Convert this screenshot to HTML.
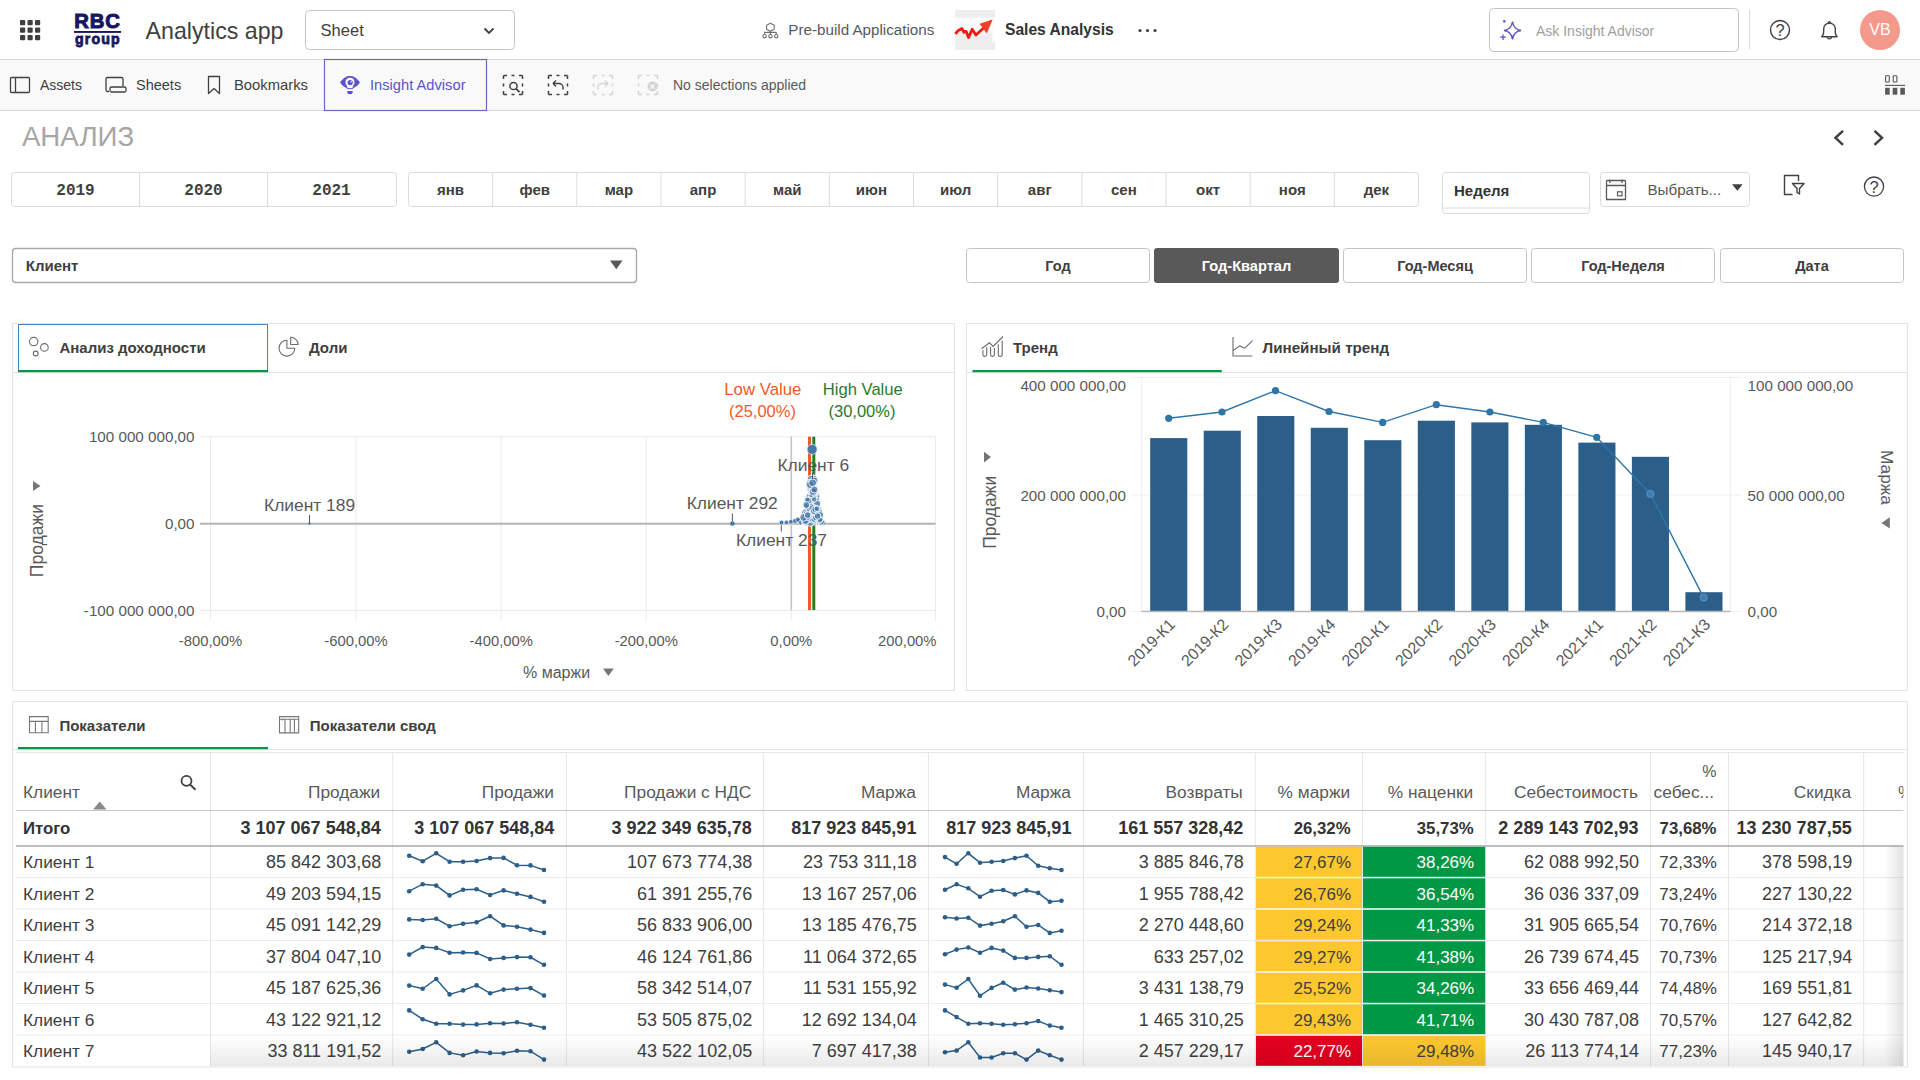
<!DOCTYPE html>
<html><head><meta charset="utf-8"><title>Analytics app</title>
<style>html,body{margin:0;padding:0;background:#fff;width:1920px;height:1080px;overflow:hidden}svg{display:block}</style></head>
<body><svg width="1920" height="1080" viewBox="0 0 1920 1080">
<rect x="0" y="0" width="1920" height="59.5" fill="#ffffff"  rx="0" />
<rect x="0" y="59.5" width="1920" height="51" fill="#f9f9f9"  rx="0" />
<line x1="0" y1="59.5" x2="1920" y2="59.5" stroke="#d6d6d6" stroke-width="1" />
<line x1="0" y1="110.5" x2="1920" y2="110.5" stroke="#d6d6d6" stroke-width="1" />
<rect x="20.0" y="20.0" width="5.2" height="5.2" fill="#404040"  rx="1" />
<rect x="20.0" y="27.5" width="5.2" height="5.2" fill="#404040"  rx="1" />
<rect x="20.0" y="35.0" width="5.2" height="5.2" fill="#404040"  rx="1" />
<rect x="27.5" y="20.0" width="5.2" height="5.2" fill="#404040"  rx="1" />
<rect x="27.5" y="27.5" width="5.2" height="5.2" fill="#404040"  rx="1" />
<rect x="27.5" y="35.0" width="5.2" height="5.2" fill="#404040"  rx="1" />
<rect x="35.0" y="20.0" width="5.2" height="5.2" fill="#404040"  rx="1" />
<rect x="35.0" y="27.5" width="5.2" height="5.2" fill="#404040"  rx="1" />
<rect x="35.0" y="35.0" width="5.2" height="5.2" fill="#404040"  rx="1" />
<text x="74.2" y="28.3" font-family="Liberation Sans" font-size="20.3" fill="#17175e" font-weight="700" text-anchor="start" stroke="#17175e" stroke-width="1" letter-spacing="0.9">RBC</text>
<rect x="74" y="31" width="47" height="1.9" fill="#17175e"  rx="0" />
<text x="75" y="43.6" font-family="Liberation Sans" font-size="14.2" fill="#17175e" font-weight="700" text-anchor="start" stroke="#17175e" stroke-width="0.8" letter-spacing="1.1">group</text>
<text x="145.6" y="39" font-family="Liberation Sans" font-size="23.2" fill="#404040" font-weight="400" text-anchor="start" >Analytics app</text>
<rect x="305.5" y="10.5" width="209" height="39" fill="#fff" stroke="#c4c4c4" stroke-width="1" rx="4" />
<text x="320.6" y="35.6" font-family="Liberation Sans" font-size="16.5" fill="#404040" font-weight="400" text-anchor="start" >Sheet</text>
<path d="M484.5 28.5 L489 33 L493.5 28.5" stroke="#404040" stroke-width="1.8" fill="none" />
<path d="M770.4 23.2 L774.2 25.3 L774.2 29.2 L770.4 31.2 L766.6 29.2 L766.6 25.3 Z M764.6 34.4 V32.4 H776.2 V34.4 M770.4 31.2 V34.4" stroke="#707070" stroke-width="1.1" fill="none" stroke-linejoin="round"/>
<circle cx="764.6" cy="36.2" r="1.7" fill="none" stroke="#707070" stroke-width="1.1" />
<circle cx="770.4" cy="36.2" r="1.7" fill="none" stroke="#707070" stroke-width="1.1" />
<circle cx="776.2" cy="36.2" r="1.7" fill="none" stroke="#707070" stroke-width="1.1" />
<text x="788.3" y="35" font-family="Liberation Sans" font-size="15.2" fill="#595959" font-weight="400" text-anchor="start" >Pre-build Applications</text>
<rect x="955" y="10" width="40" height="40" fill="#eeeeee"  rx="0" />
<rect x="955" y="17.7" width="40" height="24.3" fill="#fbfbfb"  rx="0" />
<path d="M955 35 L962 31 L968 38 L972 31 L976 36 L986 31 L992 33 L992 42 L955 42 Z" stroke="#d9d9d9" stroke-width="0" fill="#e4e4e4" opacity="0.55"/>
<path d="M955.3 33.9 L958.3 30.5 L962 28.6 L963.9 32.3 L966.2 31.4 L968.5 37.6 L972.2 29.3 L975.9 35 L984.5 27.3" stroke="#f2190e" stroke-width="2.8" fill="none" stroke-linejoin="round"/>
<path d="M980.1 24 L992.1 20 L986.6 32.8 Z" stroke="#f03c2a" stroke-width="0.8" fill="#f03c2a" stroke-linejoin="round"/>
<text x="1005" y="35" font-family="Liberation Sans" font-size="15.6" fill="#333333" font-weight="700" text-anchor="start" >Sales Analysis</text>
<circle cx="1140.0" cy="30.5" r="1.6" fill="#404040"  />
<circle cx="1147.5" cy="30.5" r="1.6" fill="#404040"  />
<circle cx="1155.0" cy="30.5" r="1.6" fill="#404040"  />
<rect x="1489.5" y="8.5" width="249" height="43" fill="#fff" stroke="#c4c4c4" stroke-width="1" rx="4" />
<path d="M1512.5 21.5 Q1513.5 29.5 1521 30.5 Q1513.5 31.5 1512.5 39.5 Q1511.5 31.5 1504 30.5 Q1511.5 29.5 1512.5 21.5 Z" stroke="#5b53c9" stroke-width="1.4" fill="none" />
<circle cx="1504.3" cy="21.3" r="1.3" fill="#5b53c9"  />
<path d="M1503 34.5 v5.5 M1500.2 37.2 h5.6" stroke="#5b53c9" stroke-width="1.3" fill="none" />
<text x="1536" y="36.2" font-family="Liberation Sans" font-size="14" fill="#a0a0a0" font-weight="400" text-anchor="start" >Ask Insight Advisor</text>
<line x1="1749.5" y1="10" x2="1749.5" y2="49" stroke="#d9d9d9" stroke-width="1" />
<circle cx="1780" cy="30" r="9.5" fill="none" stroke="#404040" stroke-width="1.4" />
<text x="1780" y="36.3" font-family="Liberation Sans" font-size="16.5" fill="#404040" font-weight="400" text-anchor="middle" >?</text>
<path d="M1821.8 36.7 H1837 L1835.6 34.2 C1835.2 32.5 1835.3 30.5 1835.3 28.8 C1835.3 25.5 1832.8 23.2 1829.4 23.2 C1826 23.2 1823.7 25.5 1823.7 28.8 C1823.7 30.5 1823.8 32.5 1823.3 34.2 Z" stroke="#404040" stroke-width="1.4" fill="none" stroke-linejoin="round"/>
<path d="M1827.2 36.9 A2.3 2.6 0 0 0 1831.7 36.9 M1828.1 23.1 A1.3 1.5 0 1 1 1830.7 23.1" stroke="#404040" stroke-width="1.2" fill="none" />
<circle cx="1880" cy="30" r="20" fill="#f4998c"  />
<text x="1880" y="34.6" font-family="Liberation Sans" font-size="16" fill="#ffffff" font-weight="400" text-anchor="middle" >VB</text>
<rect x="10.5" y="77.5" width="19" height="15" fill="none" stroke="#404040" stroke-width="1.3" rx="1" />
<line x1="15.5" y1="77.5" x2="15.5" y2="92.5" stroke="#404040" stroke-width="1.3" />
<text x="40" y="90.3" font-family="Liberation Sans" font-size="14" fill="#404040" font-weight="400" text-anchor="start" >Assets</text>
<path d="M109 91.5 h-1.5 a1.5 1.5 0 0 1 -1.5 -1.5 v-11 a1.5 1.5 0 0 1 1.5 -1.5 h14 a1.5 1.5 0 0 1 1.5 1.5 v7 M111.5 87 h13 a1.5 1.5 0 0 1 1.5 1.5 v2 a1.5 1.5 0 0 1 -1.5 1.5 h-13 a1.5 1.5 0 0 1 -1.5 -1.5 v-2 a1.5 1.5 0 0 1 1.5 -1.5 Z" stroke="#404040" stroke-width="1.3" fill="none" />
<text x="136" y="90.3" font-family="Liberation Sans" font-size="14.5" fill="#404040" font-weight="400" text-anchor="start" >Sheets</text>
<path d="M208.5 76.5 h11 v17 l-5.5 -5 l-5.5 5 Z" stroke="#404040" stroke-width="1.3" fill="none" stroke-linejoin="round"/>
<text x="234" y="90.3" font-family="Liberation Sans" font-size="14.8" fill="#404040" font-weight="400" text-anchor="start" >Bookmarks</text>
<rect x="324.5" y="59.5" width="162" height="51" fill="#f9f9f9" stroke="#6c65cb" stroke-width="1.2" rx="0" />
<path d="M340 82.5 C343.5 77.5 346.5 76 350 76 C353.5 76 356.5 77.5 360 82.5 C356.5 87 353.5 88.8 350 89 C346.5 88.8 343.5 87 340 82.5 Z" stroke="#5b53c9" stroke-width="0" fill="#5b53c9" />
<path d="M350 77.2 a5 5 0 0 1 3.6 8.5 l-0.9 2.9 h-5.4 l-0.9 -2.9 A5 5 0 0 1 350 77.2 Z" stroke="#5b53c9" stroke-width="0.9" fill="#f9f9f9" />
<circle cx="350.2" cy="82.6" r="2.6" fill="#5b53c9"  />
<circle cx="351.1" cy="81.7" r="0.8" fill="#f9f9f9"  />
<path d="M347.2 91.1 h5.6 l-0.6 2.8 h-4.4 Z" stroke="#5b53c9" stroke-width="0" fill="#5b53c9" />
<text x="370" y="90.3" font-family="Liberation Sans" font-size="14.7" fill="#5b53c9" font-weight="400" text-anchor="start" >Insight Advisor</text>
<rect x="503.5" y="75.5" width="19" height="19" fill="none" stroke="#404040" stroke-width="1.5" rx="0" stroke-dasharray="3.5 4.5 3 4.5 3.5 0"/>
<circle cx="513.5" cy="86" r="3.6" fill="none" stroke="#404040" stroke-width="1.5" />
<line x1="516" y1="88.7" x2="519.5" y2="92.2" stroke="#404040" stroke-width="1.8" />
<rect x="548.5" y="75.5" width="19" height="19" fill="none" stroke="#404040" stroke-width="1.5" rx="0" stroke-dasharray="3.5 4.5 3 4.5 3.5 0"/>
<path d="M553 83.5 l3 -3 M553 83.5 l3 3 M553 83.5 h6 a4 4 0 0 1 4 4 v2" stroke="#404040" stroke-width="1.4" fill="none" />
<rect x="593.5" y="75.5" width="19" height="19" fill="none" stroke="#d4d4d4" stroke-width="1.5" rx="0" stroke-dasharray="3.5 4.5 3 4.5 3.5 0"/>
<path d="M608 83.5 l-3 -3 M608 83.5 l-3 3 M608 83.5 h-6 a4 4 0 0 0 -4 4 v2" stroke="#d4d4d4" stroke-width="1.4" fill="none" />
<rect x="638.5" y="75.5" width="19" height="19" fill="none" stroke="#d4d4d4" stroke-width="1.5" rx="0" stroke-dasharray="3.5 4.5 3 4.5 3.5 0"/>
<circle cx="652.5" cy="86.5" r="5" fill="#d4d4d4"  />
<path d="M650.3 84.3 l4.4 4.4 M654.7 84.3 l-4.4 4.4" stroke="#f9f9f9" stroke-width="1.4" fill="none" />
<text x="673" y="90.3" font-family="Liberation Sans" font-size="14" fill="#595959" font-weight="400" text-anchor="start" >No selections applied</text>
<rect x="1885.6" y="75.8" width="3.7" height="6.2" fill="none" stroke="#555555" stroke-width="1.1" rx="0.6" />
<rect x="1893.2" y="75.8" width="3.7" height="6.2" fill="none" stroke="#555555" stroke-width="1.1" rx="0.6" />
<line x1="1885" y1="85.4" x2="1905" y2="85.4" stroke="#555555" stroke-width="1.1" />
<rect x="1885.1" y="87.8" width="4.6" height="6.9" fill="#5a5a5a"  rx="0" />
<rect x="1892.7" y="87.8" width="4.6" height="6.9" fill="#5a5a5a"  rx="0" />
<rect x="1900.3" y="87.8" width="4.6" height="6.9" fill="#5a5a5a"  rx="0" />
<text x="21.9" y="146" font-family="Liberation Sans" font-size="27.7" fill="#a6a6a6" font-weight="400" text-anchor="start" >АНАЛИЗ</text>
<path d="M1843 130.8 L1835.5 137.8 L1843 144.8" stroke="#404040" stroke-width="2.5" fill="none" />
<path d="M1874.5 130.8 L1882 137.8 L1874.5 144.8" stroke="#404040" stroke-width="2.5" fill="none" />
<rect x="11.5" y="172.5" width="385" height="34" fill="#fff" stroke="#dcdcdc" stroke-width="1" rx="3" />
<line x1="139.5" y1="172.5" x2="139.5" y2="206.5" stroke="#dcdcdc" stroke-width="1" />
<line x1="267.5" y1="172.5" x2="267.5" y2="206.5" stroke="#dcdcdc" stroke-width="1" />
<text x="75.5" y="195" font-family="Liberation Mono" font-size="16" fill="#404040" font-weight="700" text-anchor="middle" >2019</text>
<text x="203.5" y="195" font-family="Liberation Mono" font-size="16" fill="#404040" font-weight="700" text-anchor="middle" >2020</text>
<text x="331.5" y="195" font-family="Liberation Mono" font-size="16" fill="#404040" font-weight="700" text-anchor="middle" >2021</text>
<rect x="408.5" y="172.5" width="1010" height="34" fill="#fff" stroke="#dcdcdc" stroke-width="1" rx="3" />
<text x="450.5833333333333" y="195.4" font-family="Liberation Sans" font-size="15" fill="#404040" font-weight="700" text-anchor="middle" >янв</text>
<line x1="492.6666666666667" y1="172.5" x2="492.6666666666667" y2="206.5" stroke="#dcdcdc" stroke-width="1" />
<text x="534.75" y="195.4" font-family="Liberation Sans" font-size="15" fill="#404040" font-weight="700" text-anchor="middle" >фев</text>
<line x1="576.8333333333334" y1="172.5" x2="576.8333333333334" y2="206.5" stroke="#dcdcdc" stroke-width="1" />
<text x="618.9166666666667" y="195.4" font-family="Liberation Sans" font-size="15" fill="#404040" font-weight="700" text-anchor="middle" >мар</text>
<line x1="661.0" y1="172.5" x2="661.0" y2="206.5" stroke="#dcdcdc" stroke-width="1" />
<text x="703.0833333333334" y="195.4" font-family="Liberation Sans" font-size="15" fill="#404040" font-weight="700" text-anchor="middle" >апр</text>
<line x1="745.1666666666667" y1="172.5" x2="745.1666666666667" y2="206.5" stroke="#dcdcdc" stroke-width="1" />
<text x="787.25" y="195.4" font-family="Liberation Sans" font-size="15" fill="#404040" font-weight="700" text-anchor="middle" >май</text>
<line x1="829.3333333333334" y1="172.5" x2="829.3333333333334" y2="206.5" stroke="#dcdcdc" stroke-width="1" />
<text x="871.4166666666667" y="195.4" font-family="Liberation Sans" font-size="15" fill="#404040" font-weight="700" text-anchor="middle" >июн</text>
<line x1="913.5" y1="172.5" x2="913.5" y2="206.5" stroke="#dcdcdc" stroke-width="1" />
<text x="955.5833333333334" y="195.4" font-family="Liberation Sans" font-size="15" fill="#404040" font-weight="700" text-anchor="middle" >июл</text>
<line x1="997.6666666666667" y1="172.5" x2="997.6666666666667" y2="206.5" stroke="#dcdcdc" stroke-width="1" />
<text x="1039.75" y="195.4" font-family="Liberation Sans" font-size="15" fill="#404040" font-weight="700" text-anchor="middle" >авг</text>
<line x1="1081.8333333333335" y1="172.5" x2="1081.8333333333335" y2="206.5" stroke="#dcdcdc" stroke-width="1" />
<text x="1123.9166666666667" y="195.4" font-family="Liberation Sans" font-size="15" fill="#404040" font-weight="700" text-anchor="middle" >сен</text>
<line x1="1166.0" y1="172.5" x2="1166.0" y2="206.5" stroke="#dcdcdc" stroke-width="1" />
<text x="1208.0833333333335" y="195.4" font-family="Liberation Sans" font-size="15" fill="#404040" font-weight="700" text-anchor="middle" >окт</text>
<line x1="1250.1666666666667" y1="172.5" x2="1250.1666666666667" y2="206.5" stroke="#dcdcdc" stroke-width="1" />
<text x="1292.25" y="195.4" font-family="Liberation Sans" font-size="15" fill="#404040" font-weight="700" text-anchor="middle" >ноя</text>
<line x1="1334.3333333333335" y1="172.5" x2="1334.3333333333335" y2="206.5" stroke="#dcdcdc" stroke-width="1" />
<text x="1376.4166666666667" y="195.4" font-family="Liberation Sans" font-size="15" fill="#404040" font-weight="700" text-anchor="middle" >дек</text>
<rect x="1442.5" y="172.5" width="147" height="41" fill="#fff" stroke="#dcdcdc" stroke-width="1" rx="3" />
<line x1="1442.5" y1="208" x2="1589.5" y2="208" stroke="#dcdcdc" stroke-width="1" />
<text x="1454" y="196" font-family="Liberation Sans" font-size="15" fill="#333333" font-weight="700" text-anchor="start" >Неделя</text>
<rect x="1600.5" y="172.5" width="149" height="34" fill="#fff" stroke="#dcdcdc" stroke-width="1" rx="3" />
<path d="M1606.5 185.5 h19 M1606.5 199.5 v-18 a1 1 0 0 1 1 -1 h17 a1 1 0 0 1 1 1 v18 Z M1609.8 179.5 v3.5 M1622 179.5 v3.5" stroke="#595959" stroke-width="1.3" fill="none" />
<rect x="1617.5" y="191.8" width="4.5" height="4" fill="none" stroke="#595959" stroke-width="1.2" rx="0" />
<text x="1647.4" y="195" font-family="Liberation Sans" font-size="15.2" fill="#595959" font-weight="400" text-anchor="start" >Выбрать...</text>
<path d="M1732 184.2 h10.7 l-5.35 6.5 Z" stroke="#404040" stroke-width="0" fill="#404040" />
<path d="M1798.5 181 v-5.5 h-14 v19 h8" stroke="#404040" stroke-width="1.4" fill="none" />
<path d="M1792.5 183.5 h11.5 l-4.5 5 v5.5 l-2.5 -1.5 v-4 Z" stroke="#404040" stroke-width="1.4" fill="none" stroke-linejoin="round"/>
<circle cx="1874" cy="186.6" r="9.6" fill="none" stroke="#404040" stroke-width="1.3" />
<text x="1874" y="192.6" font-family="Liberation Sans" font-size="16.5" fill="#404040" font-weight="400" text-anchor="middle" >?</text>
<rect x="12.5" y="248.5" width="624" height="34" fill="#fff" stroke="#a8a8a8" stroke-width="1.3" rx="3" />
<text x="25.8" y="271" font-family="Liberation Sans" font-size="15" fill="#404040" font-weight="700" text-anchor="start" >Клиент</text>
<path d="M610 260.5 h12.6 l-6.3 8.8 Z" stroke="#595959" stroke-width="0" fill="#595959" />
<rect x="966.5" y="248.5" width="183" height="34" fill="#fff" stroke="#c4c4c4" stroke-width="1" rx="3" />
<text x="1058.0" y="271.2" font-family="Liberation Sans" font-size="14.5" fill="#404040" font-weight="700" text-anchor="middle" >Год</text>
<rect x="1154" y="248" width="185" height="35" fill="#595959"  rx="3" />
<text x="1246.5" y="271.2" font-family="Liberation Sans" font-size="14.6" fill="#ffffff" font-weight="700" text-anchor="middle" >Год-Квартал</text>
<rect x="1343.5" y="248.5" width="183" height="34" fill="#fff" stroke="#c4c4c4" stroke-width="1" rx="3" />
<text x="1435.0" y="271.2" font-family="Liberation Sans" font-size="14.5" fill="#404040" font-weight="700" text-anchor="middle" >Год-Месяц</text>
<rect x="1531.5" y="248.5" width="183" height="34" fill="#fff" stroke="#c4c4c4" stroke-width="1" rx="3" />
<text x="1623.0" y="271.2" font-family="Liberation Sans" font-size="14.5" fill="#404040" font-weight="700" text-anchor="middle" >Год-Неделя</text>
<rect x="1720.5" y="248.5" width="183" height="34" fill="#fff" stroke="#c4c4c4" stroke-width="1" rx="3" />
<text x="1812.0" y="271.2" font-family="Liberation Sans" font-size="14.5" fill="#404040" font-weight="700" text-anchor="middle" >Дата</text>
<rect x="12.5" y="323.5" width="942" height="367" fill="#fff" stroke="#e3e3e3" stroke-width="1" rx="0" />
<line x1="12.5" y1="372.5" x2="954.5" y2="372.5" stroke="#e3e3e3" stroke-width="1" />
<rect x="18.5" y="324.5" width="249" height="47" fill="none" stroke="#4e84b5" stroke-width="1" rx="0" />
<rect x="18" y="370" width="250" height="2.2" fill="#009845"  rx="0" />
<circle cx="33.7" cy="341.6" r="4.2" fill="none" stroke="#6b6b6b" stroke-width="1.1" />
<circle cx="44.4" cy="347.4" r="3.8" fill="none" stroke="#6b6b6b" stroke-width="1.1" />
<circle cx="35.7" cy="353.5" r="2.4" fill="none" stroke="#6b6b6b" stroke-width="1.1" />
<text x="59.4" y="353.2" font-family="Liberation Sans" font-size="15" fill="#404040" font-weight="700" text-anchor="start" >Анализ доходности</text>
<path d="M286.9 340.3 A7.9 7.9 0 1 0 294.8 348.2 H286.9 Z" stroke="#6b6b6b" stroke-width="1.1" fill="none" />
<path d="M290.7 337.3 V344.5 H298 A7.3 7.3 0 0 0 290.7 337.3 Z" stroke="#6b6b6b" stroke-width="1.1" fill="none" />
<text x="309" y="353.2" font-family="Liberation Sans" font-size="15" fill="#404040" font-weight="700" text-anchor="start" >Доли</text>
<line x1="210.5" y1="436.5" x2="210.5" y2="621" stroke="#ebebeb" stroke-width="1" />
<line x1="356.0" y1="436.5" x2="356.0" y2="621" stroke="#ebebeb" stroke-width="1" />
<line x1="501.2" y1="436.5" x2="501.2" y2="621" stroke="#ebebeb" stroke-width="1" />
<line x1="646.3" y1="436.5" x2="646.3" y2="621" stroke="#ebebeb" stroke-width="1" />
<line x1="791.3" y1="436.5" x2="791.3" y2="621" stroke="#ebebeb" stroke-width="1" />
<line x1="935.5" y1="436.5" x2="935.5" y2="621" stroke="#ebebeb" stroke-width="1" />
<line x1="200" y1="436.75" x2="935.5" y2="436.75" stroke="#ebebeb" stroke-width="1" />
<line x1="200" y1="610.5" x2="935.5" y2="610.5" stroke="#ebebeb" stroke-width="1" />
<line x1="200" y1="523.75" x2="935.5" y2="523.75" stroke="#b3b3b3" stroke-width="2" />
<line x1="791.3" y1="436.5" x2="791.3" y2="610.5" stroke="#c4c4c4" stroke-width="1.6" />
<text x="194.5" y="442.05" font-family="Liberation Sans" font-size="15.2" fill="#595959" font-weight="400" text-anchor="end" >100 000 000,00</text>
<text x="194.5" y="529.05" font-family="Liberation Sans" font-size="15.2" fill="#595959" font-weight="400" text-anchor="end" >0,00</text>
<text x="194.5" y="615.8" font-family="Liberation Sans" font-size="15.2" fill="#595959" font-weight="400" text-anchor="end" >-100 000 000,00</text>
<text x="210.5" y="645.8" font-family="Liberation Sans" font-size="14.8" fill="#595959" font-weight="400" text-anchor="middle" >-800,00%</text>
<text x="356.0" y="645.8" font-family="Liberation Sans" font-size="14.8" fill="#595959" font-weight="400" text-anchor="middle" >-600,00%</text>
<text x="501.2" y="645.8" font-family="Liberation Sans" font-size="14.8" fill="#595959" font-weight="400" text-anchor="middle" >-400,00%</text>
<text x="646.3" y="645.8" font-family="Liberation Sans" font-size="14.8" fill="#595959" font-weight="400" text-anchor="middle" >-200,00%</text>
<text x="791.3" y="645.8" font-family="Liberation Sans" font-size="14.8" fill="#595959" font-weight="400" text-anchor="middle" >0,00%</text>
<text x="936.5" y="645.8" font-family="Liberation Sans" font-size="14.8" fill="#595959" font-weight="400" text-anchor="end" >200,00%</text>
<text x="0" y="0" font-family="Liberation Sans" font-size="17.5" fill="#595959" font-weight="400" text-anchor="middle" transform="translate(42.5,540.6) rotate(-90)">Продажи</text>
<path d="M33 481 L40.5 486 L33 491 Z" stroke="#757575" stroke-width="0" fill="#757575" />
<text x="523" y="678" font-family="Liberation Sans" font-size="16" fill="#595959" font-weight="400" text-anchor="start" >% маржи</text>
<path d="M603 668.6 h10.8 l-5.4 7.3 Z" stroke="#757575" stroke-width="0" fill="#757575" />
<line x1="809.5" y1="436.7" x2="809.5" y2="610" stroke="#f05a28" stroke-width="3" />
<line x1="813.8" y1="436.7" x2="813.8" y2="610" stroke="#2b7a2b" stroke-width="3" />
<text x="762.8" y="395.2" font-family="Liberation Sans" font-size="16.8" fill="#f05a28" font-weight="400" text-anchor="middle" >Low Value</text>
<text x="762.5" y="416.8" font-family="Liberation Sans" font-size="16.5" fill="#f05a28" font-weight="400" text-anchor="middle" >(25,00%)</text>
<text x="862.8" y="395.2" font-family="Liberation Sans" font-size="16.6" fill="#2b7a2b" font-weight="400" text-anchor="middle" >High Value</text>
<text x="862" y="416.8" font-family="Liberation Sans" font-size="16.5" fill="#2b7a2b" font-weight="400" text-anchor="middle" >(30,00%)</text>
<line x1="309.5" y1="515" x2="309.5" y2="523" stroke="#595959" stroke-width="1" />
<circle cx="309.5" cy="523.5" r="1.2" fill="#4477aa"  />
<line x1="732.4" y1="513.5" x2="732.4" y2="521" stroke="#595959" stroke-width="1" />
<circle cx="732.4" cy="523.5" r="2.3" fill="#4477aa"  />
<line x1="781.3" y1="524" x2="781.3" y2="531.5" stroke="#595959" stroke-width="1" />
<circle cx="781.5" cy="522.5" r="2.3" fill="#4477aa" stroke="#ffffff" stroke-width="0.6" />
<circle cx="786.5" cy="522.5" r="2.2" fill="#4477aa" stroke="#ffffff" stroke-width="0.6" />
<circle cx="791" cy="521.8" r="2.3" fill="#4477aa" stroke="#ffffff" stroke-width="0.6" />
<circle cx="795" cy="521" r="2.4" fill="#4477aa" stroke="#ffffff" stroke-width="0.6" />
<circle cx="798" cy="519.8" r="2.5" fill="#4477aa" stroke="#ffffff" stroke-width="0.6" />
<circle cx="801" cy="522.5" r="2.4" fill="#4477aa" stroke="#ffffff" stroke-width="0.6" />
<circle cx="805.5" cy="523" r="2.3" fill="#4477aa" stroke="#ffffff" stroke-width="0.6" />
<circle cx="814" cy="523" r="2.4" fill="#4477aa" stroke="#ffffff" stroke-width="0.6" />
<circle cx="821" cy="522.5" r="2.5" fill="#4477aa" stroke="#ffffff" stroke-width="0.6" />
<circle cx="823.5" cy="523" r="2.3" fill="#4477aa" stroke="#ffffff" stroke-width="0.6" />
<circle cx="809.4" cy="488.6" r="3.0" fill="#4477aa" stroke="#ffffff" stroke-width="0.9" fill-opacity="0.75"/>
<circle cx="809.7" cy="485.0" r="3.0" fill="#4477aa" stroke="#ffffff" stroke-width="0.9" fill-opacity="0.75"/>
<circle cx="817.5" cy="519.3" r="3.6" fill="#4477aa" stroke="#ffffff" stroke-width="0.9" fill-opacity="0.75"/>
<circle cx="812.2" cy="488.0" r="2.8" fill="#4477aa" stroke="#ffffff" stroke-width="0.9" fill-opacity="0.75"/>
<circle cx="809.8" cy="485.8" r="2.7" fill="#4477aa" stroke="#ffffff" stroke-width="0.9" fill-opacity="0.75"/>
<circle cx="818.1" cy="519.7" r="3.7" fill="#4477aa" stroke="#ffffff" stroke-width="0.9" fill-opacity="0.75"/>
<circle cx="807.1" cy="514.0" r="2.9" fill="#4477aa" stroke="#ffffff" stroke-width="0.9" fill-opacity="0.75"/>
<circle cx="815.0" cy="506.2" r="3.8" fill="#4477aa" stroke="#ffffff" stroke-width="0.9" fill-opacity="0.75"/>
<circle cx="804.8" cy="517.6" r="3.4" fill="#4477aa" stroke="#ffffff" stroke-width="0.9" fill-opacity="0.75"/>
<circle cx="812.1" cy="508.2" r="2.7" fill="#4477aa" stroke="#ffffff" stroke-width="0.9" fill-opacity="0.75"/>
<circle cx="807.8" cy="499.3" r="3.9" fill="#4477aa" stroke="#ffffff" stroke-width="0.9" fill-opacity="0.75"/>
<circle cx="812.8" cy="516.9" r="2.9" fill="#4477aa" stroke="#ffffff" stroke-width="0.9" fill-opacity="0.75"/>
<circle cx="813.3" cy="518.9" r="3.8" fill="#4477aa" stroke="#ffffff" stroke-width="0.9" fill-opacity="0.75"/>
<circle cx="812.1" cy="516.2" r="3.1" fill="#4477aa" stroke="#ffffff" stroke-width="0.9" fill-opacity="0.75"/>
<circle cx="811.1" cy="505.0" r="2.7" fill="#4477aa" stroke="#ffffff" stroke-width="0.9" fill-opacity="0.75"/>
<circle cx="814.3" cy="491.7" r="2.5" fill="#4477aa" stroke="#ffffff" stroke-width="0.9" fill-opacity="0.75"/>
<circle cx="812.5" cy="480.1" r="2.8" fill="#4477aa" stroke="#ffffff" stroke-width="0.9" fill-opacity="0.75"/>
<circle cx="811.7" cy="502.1" r="2.9" fill="#4477aa" stroke="#ffffff" stroke-width="0.9" fill-opacity="0.75"/>
<circle cx="806.0" cy="522.9" r="3.1" fill="#4477aa" stroke="#ffffff" stroke-width="0.9" fill-opacity="0.75"/>
<circle cx="812.8" cy="487.1" r="2.8" fill="#4477aa" stroke="#ffffff" stroke-width="0.9" fill-opacity="0.75"/>
<circle cx="814.0" cy="494.0" r="2.9" fill="#4477aa" stroke="#ffffff" stroke-width="0.9" fill-opacity="0.75"/>
<circle cx="816.7" cy="503.1" r="2.6" fill="#4477aa" stroke="#ffffff" stroke-width="0.9" fill-opacity="0.75"/>
<circle cx="810.9" cy="480.8" r="3.6" fill="#4477aa" stroke="#ffffff" stroke-width="0.9" fill-opacity="0.75"/>
<circle cx="808.7" cy="505.7" r="2.9" fill="#4477aa" stroke="#ffffff" stroke-width="0.9" fill-opacity="0.75"/>
<circle cx="811.8" cy="486.0" r="2.5" fill="#4477aa" stroke="#ffffff" stroke-width="0.9" fill-opacity="0.75"/>
<circle cx="817.6" cy="509.4" r="3.9" fill="#4477aa" stroke="#ffffff" stroke-width="0.9" fill-opacity="0.75"/>
<circle cx="818.8" cy="511.1" r="2.4" fill="#4477aa" stroke="#ffffff" stroke-width="0.9" fill-opacity="0.75"/>
<circle cx="815.4" cy="491.0" r="3.6" fill="#4477aa" stroke="#ffffff" stroke-width="0.9" fill-opacity="0.75"/>
<circle cx="816.1" cy="496.5" r="3.4" fill="#4477aa" stroke="#ffffff" stroke-width="0.9" fill-opacity="0.75"/>
<circle cx="808.6" cy="514.8" r="2.7" fill="#4477aa" stroke="#ffffff" stroke-width="0.9" fill-opacity="0.75"/>
<circle cx="808.5" cy="498.0" r="3.0" fill="#4477aa" stroke="#ffffff" stroke-width="0.9" fill-opacity="0.75"/>
<circle cx="808.8" cy="521.3" r="2.4" fill="#4477aa" stroke="#ffffff" stroke-width="0.9" fill-opacity="0.75"/>
<circle cx="810.7" cy="480.0" r="3.7" fill="#4477aa" stroke="#ffffff" stroke-width="0.9" fill-opacity="0.75"/>
<circle cx="810.2" cy="494.3" r="2.6" fill="#4477aa" stroke="#ffffff" stroke-width="0.9" fill-opacity="0.75"/>
<circle cx="810.5" cy="522.2" r="2.7" fill="#4477aa" stroke="#ffffff" stroke-width="0.9" fill-opacity="0.75"/>
<circle cx="810.2" cy="480.7" r="2.7" fill="#4477aa" stroke="#ffffff" stroke-width="0.9" fill-opacity="0.75"/>
<circle cx="807.2" cy="508.5" r="2.5" fill="#4477aa" stroke="#ffffff" stroke-width="0.9" fill-opacity="0.75"/>
<circle cx="809.4" cy="500.1" r="4.0" fill="#4477aa" stroke="#ffffff" stroke-width="0.9" fill-opacity="0.75"/>
<circle cx="812.1" cy="483.5" r="3.6" fill="#4477aa" stroke="#ffffff" stroke-width="0.9" fill-opacity="0.75"/>
<circle cx="816.5" cy="496.4" r="3.2" fill="#4477aa" stroke="#ffffff" stroke-width="0.9" fill-opacity="0.75"/>
<circle cx="811.4" cy="488.9" r="2.5" fill="#4477aa" stroke="#ffffff" stroke-width="0.9" fill-opacity="0.75"/>
<circle cx="809.7" cy="497.0" r="3.8" fill="#4477aa" stroke="#ffffff" stroke-width="0.9" fill-opacity="0.75"/>
<circle cx="812.0" cy="515.4" r="2.5" fill="#4477aa" stroke="#ffffff" stroke-width="0.9" fill-opacity="0.75"/>
<circle cx="810.3" cy="489.4" r="2.7" fill="#4477aa" stroke="#ffffff" stroke-width="0.9" fill-opacity="0.75"/>
<circle cx="814.4" cy="488.4" r="2.6" fill="#4477aa" stroke="#ffffff" stroke-width="0.9" fill-opacity="0.75"/>
<circle cx="813.7" cy="480.3" r="3.3" fill="#4477aa" stroke="#ffffff" stroke-width="0.9" fill-opacity="0.75"/>
<circle cx="810.1" cy="522.6" r="3.8" fill="#4477aa" stroke="#ffffff" stroke-width="0.9" fill-opacity="0.75"/>
<circle cx="815.9" cy="507.4" r="3.6" fill="#4477aa" stroke="#ffffff" stroke-width="0.9" fill-opacity="0.75"/>
<circle cx="807.7" cy="500.2" r="2.7" fill="#4477aa" stroke="#ffffff" stroke-width="0.9" fill-opacity="0.75"/>
<circle cx="818.9" cy="517.3" r="3.9" fill="#4477aa" stroke="#ffffff" stroke-width="0.9" fill-opacity="0.75"/>
<circle cx="813.3" cy="493.1" r="3.7" fill="#4477aa" stroke="#ffffff" stroke-width="0.9" fill-opacity="0.75"/>
<circle cx="816.1" cy="506.9" r="3.2" fill="#4477aa" stroke="#ffffff" stroke-width="0.9" fill-opacity="0.75"/>
<circle cx="814.5" cy="507.5" r="2.8" fill="#4477aa" stroke="#ffffff" stroke-width="0.9" fill-opacity="0.75"/>
<circle cx="820.4" cy="519.5" r="2.5" fill="#4477aa" stroke="#ffffff" stroke-width="0.9" fill-opacity="0.75"/>
<circle cx="820.9" cy="521.7" r="3.5" fill="#4477aa" stroke="#ffffff" stroke-width="0.9" fill-opacity="0.75"/>
<circle cx="813.6" cy="480.0" r="2.6" fill="#4477aa" stroke="#ffffff" stroke-width="0.9" fill-opacity="0.75"/>
<circle cx="815.2" cy="521.6" r="2.5" fill="#4477aa" stroke="#ffffff" stroke-width="0.9" fill-opacity="0.75"/>
<circle cx="812.7" cy="485.5" r="3.3" fill="#4477aa" stroke="#ffffff" stroke-width="0.9" fill-opacity="0.75"/>
<circle cx="818.4" cy="511.6" r="2.7" fill="#4477aa" stroke="#ffffff" stroke-width="0.9" fill-opacity="0.75"/>
<circle cx="813.5" cy="478.1" r="2.4" fill="#4477aa" stroke="#ffffff" stroke-width="0.9" fill-opacity="0.75"/>
<circle cx="805.3" cy="517.4" r="3.7" fill="#4477aa" stroke="#ffffff" stroke-width="0.9" fill-opacity="0.75"/>
<circle cx="817.9" cy="513.2" r="3.3" fill="#4477aa" stroke="#ffffff" stroke-width="0.9" fill-opacity="0.75"/>
<circle cx="806.8" cy="517.5" r="3.5" fill="#4477aa" stroke="#ffffff" stroke-width="0.9" fill-opacity="0.75"/>
<circle cx="815.1" cy="492.9" r="3.6" fill="#4477aa" stroke="#ffffff" stroke-width="0.9" fill-opacity="0.75"/>
<circle cx="812.3" cy="499.2" r="2.4" fill="#4477aa" stroke="#ffffff" stroke-width="0.9" fill-opacity="0.75"/>
<circle cx="812.4" cy="479.5" r="3.2" fill="#4477aa" stroke="#ffffff" stroke-width="0.9" fill-opacity="0.75"/>
<circle cx="813.9" cy="516.9" r="2.6" fill="#4477aa" stroke="#ffffff" stroke-width="0.9" fill-opacity="0.75"/>
<circle cx="814.2" cy="494.3" r="3.2" fill="#4477aa" stroke="#ffffff" stroke-width="0.9" fill-opacity="0.75"/>
<circle cx="813.2" cy="478.5" r="3.7" fill="#4477aa" stroke="#ffffff" stroke-width="0.9" fill-opacity="0.75"/>
<circle cx="812.2" cy="481.8" r="3.0" fill="#4477aa" stroke="#ffffff" stroke-width="0.9" fill-opacity="0.75"/>
<circle cx="809.0" cy="513.4" r="2.8" fill="#4477aa" stroke="#ffffff" stroke-width="0.9" fill-opacity="0.75"/>
<circle cx="816.9" cy="499.9" r="2.6" fill="#4477aa" stroke="#ffffff" stroke-width="0.9" fill-opacity="0.75"/>
<circle cx="812.6" cy="483.2" r="3.8" fill="#4477aa" stroke="#ffffff" stroke-width="0.9" fill-opacity="0.75"/>
<circle cx="811.3" cy="501.1" r="3.8" fill="#4477aa" stroke="#ffffff" stroke-width="0.9" fill-opacity="0.75"/>
<circle cx="805.3" cy="512.9" r="3.8" fill="#4477aa" stroke="#ffffff" stroke-width="0.9" fill-opacity="0.75"/>
<circle cx="810.8" cy="486.8" r="3.7" fill="#4477aa" stroke="#ffffff" stroke-width="0.9" fill-opacity="0.75"/>
<circle cx="814.8" cy="497.0" r="2.7" fill="#4477aa" stroke="#ffffff" stroke-width="0.9" fill-opacity="0.75"/>
<circle cx="806.4" cy="517.3" r="2.6" fill="#4477aa" stroke="#ffffff" stroke-width="0.9" fill-opacity="0.75"/>
<circle cx="810.3" cy="500.2" r="3.3" fill="#4477aa" stroke="#ffffff" stroke-width="0.9" fill-opacity="0.75"/>
<circle cx="815.8" cy="518.7" r="2.4" fill="#4477aa" stroke="#ffffff" stroke-width="0.9" fill-opacity="0.75"/>
<circle cx="812.3" cy="492.0" r="3.2" fill="#4477aa" stroke="#ffffff" stroke-width="0.9" fill-opacity="0.75"/>
<circle cx="811.8" cy="510.2" r="2.5" fill="#4477aa" stroke="#ffffff" stroke-width="0.9" fill-opacity="0.75"/>
<circle cx="814.3" cy="489.0" r="3.0" fill="#4477aa" stroke="#ffffff" stroke-width="0.9" fill-opacity="0.75"/>
<circle cx="819.5" cy="512.5" r="3.4" fill="#4477aa" stroke="#ffffff" stroke-width="0.9" fill-opacity="0.75"/>
<circle cx="813.5" cy="508.5" r="2.9" fill="#4477aa" stroke="#ffffff" stroke-width="0.9" fill-opacity="0.75"/>
<circle cx="811.4" cy="519.1" r="3.9" fill="#4477aa" stroke="#ffffff" stroke-width="0.9" fill-opacity="0.75"/>
<circle cx="814.8" cy="491.8" r="3.7" fill="#4477aa" stroke="#ffffff" stroke-width="0.9" fill-opacity="0.75"/>
<circle cx="811.3" cy="505.6" r="2.6" fill="#4477aa" stroke="#ffffff" stroke-width="0.9" fill-opacity="0.75"/>
<circle cx="809.9" cy="512.7" r="3.5" fill="#4477aa" stroke="#ffffff" stroke-width="0.9" fill-opacity="0.75"/>
<circle cx="809.9" cy="484.0" r="2.6" fill="#4477aa" stroke="#ffffff" stroke-width="0.9" fill-opacity="0.75"/>
<circle cx="806.8" cy="514.4" r="3.8" fill="#4477aa" stroke="#ffffff" stroke-width="0.9" fill-opacity="0.75"/>
<circle cx="812.6" cy="494.7" r="3.0" fill="#4477aa" stroke="#ffffff" stroke-width="0.9" fill-opacity="0.75"/>
<circle cx="806.8" cy="505.9" r="3.0" fill="#4477aa" stroke="#ffffff" stroke-width="0.9" fill-opacity="0.75"/>
<circle cx="806.1" cy="520.1" r="3.4" fill="#4477aa" stroke="#ffffff" stroke-width="0.9" fill-opacity="0.75"/>
<circle cx="810.4" cy="492.7" r="2.4" fill="#4477aa" stroke="#ffffff" stroke-width="0.9" fill-opacity="0.75"/>
<circle cx="813.7" cy="478.9" r="3.7" fill="#4477aa" stroke="#ffffff" stroke-width="0.9" fill-opacity="0.75"/>
<circle cx="816.9" cy="514.0" r="3.9" fill="#4477aa" stroke="#ffffff" stroke-width="0.9" fill-opacity="0.75"/>
<circle cx="812.5" cy="485.1" r="3.2" fill="#4477aa" stroke="#ffffff" stroke-width="0.9" fill-opacity="0.75"/>
<circle cx="817.2" cy="503.8" r="3.6" fill="#4477aa" stroke="#ffffff" stroke-width="0.9" fill-opacity="0.75"/>
<circle cx="804.6" cy="521.6" r="3.4" fill="#4477aa" stroke="#ffffff" stroke-width="0.9" fill-opacity="0.75"/>
<circle cx="815.4" cy="508.4" r="3.4" fill="#4477aa" stroke="#ffffff" stroke-width="0.9" fill-opacity="0.75"/>
<circle cx="808.7" cy="515.4" r="3.9" fill="#4477aa" stroke="#ffffff" stroke-width="0.9" fill-opacity="0.75"/>
<circle cx="812.9" cy="496.3" r="3.8" fill="#4477aa" stroke="#ffffff" stroke-width="0.9" fill-opacity="0.75"/>
<circle cx="809.3" cy="509.7" r="2.8" fill="#4477aa" stroke="#ffffff" stroke-width="0.9" fill-opacity="0.75"/>
<circle cx="813.0" cy="492.7" r="4.0" fill="#4477aa" stroke="#ffffff" stroke-width="0.9" fill-opacity="0.75"/>
<circle cx="810.2" cy="518.5" r="3.0" fill="#4477aa" stroke="#ffffff" stroke-width="0.9" fill-opacity="0.75"/>
<circle cx="808.5" cy="514.8" r="3.1" fill="#4477aa" stroke="#ffffff" stroke-width="0.9" fill-opacity="0.75"/>
<circle cx="810.8" cy="478.6" r="3.3" fill="#4477aa" stroke="#ffffff" stroke-width="0.9" fill-opacity="0.75"/>
<circle cx="813.6" cy="509.2" r="3.0" fill="#4477aa" stroke="#ffffff" stroke-width="0.9" fill-opacity="0.75"/>
<circle cx="814.3" cy="520.8" r="2.6" fill="#4477aa" stroke="#ffffff" stroke-width="0.9" fill-opacity="0.75"/>
<circle cx="814.0" cy="481.0" r="4.0" fill="#4477aa" stroke="#ffffff" stroke-width="0.9" fill-opacity="0.75"/>
<circle cx="813.9" cy="519.4" r="2.9" fill="#4477aa" stroke="#ffffff" stroke-width="0.9" fill-opacity="0.75"/>
<circle cx="810.9" cy="482.1" r="2.8" fill="#4477aa" stroke="#ffffff" stroke-width="0.9" fill-opacity="0.75"/>
<circle cx="819.2" cy="519.8" r="3.6" fill="#4477aa" stroke="#ffffff" stroke-width="0.9" fill-opacity="0.75"/>
<circle cx="810.6" cy="484.7" r="2.9" fill="#4477aa" stroke="#ffffff" stroke-width="0.9" fill-opacity="0.75"/>
<circle cx="805.7" cy="520.7" r="3.7" fill="#4477aa" stroke="#ffffff" stroke-width="0.9" fill-opacity="0.75"/>
<circle cx="812.7" cy="508.6" r="3.9" fill="#4477aa" stroke="#ffffff" stroke-width="0.9" fill-opacity="0.75"/>
<circle cx="812.2" cy="489.8" r="2.7" fill="#4477aa" stroke="#ffffff" stroke-width="0.9" fill-opacity="0.75"/>
<circle cx="809.9" cy="482.4" r="2.9" fill="#4477aa" stroke="#ffffff" stroke-width="0.9" fill-opacity="0.75"/>
<circle cx="809.9" cy="483.5" r="4.0" fill="#4477aa" stroke="#ffffff" stroke-width="0.9" fill-opacity="0.75"/>
<circle cx="814.8" cy="491.0" r="3.5" fill="#4477aa" stroke="#ffffff" stroke-width="0.9" fill-opacity="0.75"/>
<circle cx="814.3" cy="510.9" r="3.9" fill="#4477aa" stroke="#ffffff" stroke-width="0.9" fill-opacity="0.75"/>
<circle cx="815.8" cy="517.5" r="3.3" fill="#4477aa" stroke="#ffffff" stroke-width="0.9" fill-opacity="0.75"/>
<circle cx="815.1" cy="509.2" r="3.3" fill="#4477aa" stroke="#ffffff" stroke-width="0.9" fill-opacity="0.75"/>
<circle cx="808.3" cy="500.6" r="3.8" fill="#4477aa" stroke="#ffffff" stroke-width="0.9" fill-opacity="0.75"/>
<circle cx="807.5" cy="499.8" r="2.7" fill="#4477aa" stroke="#ffffff" stroke-width="0.9" fill-opacity="0.75"/>
<circle cx="807.8" cy="517.4" r="3.0" fill="#4477aa" stroke="#ffffff" stroke-width="0.9" fill-opacity="0.75"/>
<circle cx="817.0" cy="508.7" r="2.9" fill="#4477aa" stroke="#ffffff" stroke-width="0.9" fill-opacity="0.75"/>
<circle cx="811.3" cy="495.4" r="2.4" fill="#4477aa" stroke="#ffffff" stroke-width="0.9" fill-opacity="0.75"/>
<circle cx="803.6" cy="517.4" r="3.9" fill="#4477aa" stroke="#ffffff" stroke-width="0.9" fill-opacity="0.75"/>
<circle cx="810.2" cy="484.9" r="3.8" fill="#4477aa" stroke="#ffffff" stroke-width="0.9" fill-opacity="0.75"/>
<circle cx="807.6" cy="515.1" r="3.3" fill="#4477aa" stroke="#ffffff" stroke-width="0.9" fill-opacity="0.75"/>
<circle cx="814.2" cy="499.5" r="2.7" fill="#4477aa" stroke="#ffffff" stroke-width="0.9" fill-opacity="0.75"/>
<circle cx="820.2" cy="515.1" r="3.5" fill="#4477aa" stroke="#ffffff" stroke-width="0.9" fill-opacity="0.75"/>
<circle cx="820.0" cy="519.5" r="3.0" fill="#4477aa" stroke="#ffffff" stroke-width="0.9" fill-opacity="0.75"/>
<circle cx="817.6" cy="516.1" r="3.3" fill="#4477aa" stroke="#ffffff" stroke-width="0.9" fill-opacity="0.75"/>
<circle cx="812.6" cy="482.8" r="3.9" fill="#4477aa" stroke="#ffffff" stroke-width="0.9" fill-opacity="0.75"/>
<circle cx="813.1" cy="491.7" r="3.8" fill="#4477aa" stroke="#ffffff" stroke-width="0.9" fill-opacity="0.75"/>
<circle cx="806.3" cy="505.0" r="3.4" fill="#4477aa" stroke="#ffffff" stroke-width="0.9" fill-opacity="0.75"/>
<circle cx="814.4" cy="489.5" r="3.5" fill="#4477aa" stroke="#ffffff" stroke-width="0.9" fill-opacity="0.75"/>
<circle cx="812.1" cy="449.4" r="5" fill="#4477aa" stroke="#ffffff" stroke-width="0.6" />
<text x="813.3" y="470.7" font-family="Liberation Sans" font-size="17.4" fill="#595959" font-weight="400" text-anchor="middle" >Клиент 6</text>
<line x1="812.5" y1="473" x2="812.5" y2="479" stroke="#595959" stroke-width="1" />
<text x="732.2" y="509" font-family="Liberation Sans" font-size="17.4" fill="#595959" font-weight="400" text-anchor="middle" >Клиент 292</text>
<text x="781.5" y="546.3" font-family="Liberation Sans" font-size="17.4" fill="#595959" font-weight="400" text-anchor="middle" >Клиент 237</text>
<text x="309.6" y="511.3" font-family="Liberation Sans" font-size="17.4" fill="#595959" font-weight="400" text-anchor="middle" >Клиент 189</text>
<rect x="966.5" y="323.5" width="941" height="367" fill="#fff" stroke="#e3e3e3" stroke-width="1" rx="0" />
<line x1="966.5" y1="372.5" x2="1907.5" y2="372.5" stroke="#e3e3e3" stroke-width="1" />
<rect x="972.5" y="370" width="249.3" height="2.2" fill="#009845"  rx="0" />
<path d="M982.9 350.2 V354.5 A1.9 1.9 0 0 0 986.7 354.5 V347.2 M990.6 346.9 V354.5 A1.9 1.9 0 0 0 994.4 354.5 V348.1 M998.3 344.2 V354.5 A1.9 1.9 0 0 0 1002.2 354.5 V340.7" stroke="#6b6b6b" stroke-width="1.1" fill="none" />
<path d="M981.4 348.7 L989.5 342.8 L993.1 346.5 L1003 336.5" stroke="#6b6b6b" stroke-width="1.1" fill="none" />
<text x="1013" y="353.2" font-family="Liberation Sans" font-size="15" fill="#404040" font-weight="700" text-anchor="start" >Тренд</text>
<path d="M1233 337 V356 H1252.4" stroke="#6b6b6b" stroke-width="1.1" fill="none" />
<path d="M1233.1 350.5 L1239.8 345.9 L1244.7 348.2 L1252.6 340.7" stroke="#6b6b6b" stroke-width="1.1" fill="none" />
<text x="1262.5" y="353.2" font-family="Liberation Sans" font-size="15.2" fill="#404040" font-weight="700" text-anchor="start" >Линейный тренд</text>
<line x1="1141.6" y1="377.4" x2="1730.4" y2="377.4" stroke="#efefef" stroke-width="1" />
<line x1="1141.6" y1="495.0" x2="1730.4" y2="495.0" stroke="#efefef" stroke-width="1" />
<line x1="1131" y1="377.4" x2="1141.6" y2="377.4" stroke="#efefef" stroke-width="1" />
<line x1="1131" y1="495" x2="1141.6" y2="495" stroke="#efefef" stroke-width="1" />
<line x1="1131" y1="611.5" x2="1141.6" y2="611.5" stroke="#efefef" stroke-width="1" />
<line x1="1730.4" y1="377.4" x2="1741.6" y2="377.4" stroke="#efefef" stroke-width="1" />
<line x1="1730.4" y1="495" x2="1741.6" y2="495" stroke="#efefef" stroke-width="1" />
<line x1="1730.4" y1="611.5" x2="1741.6" y2="611.5" stroke="#efefef" stroke-width="1" />
<line x1="1141.6" y1="377" x2="1141.6" y2="611.5" stroke="#efefef" stroke-width="1" />
<line x1="1730.4" y1="377" x2="1730.4" y2="611.5" stroke="#efefef" stroke-width="1" />
<rect x="1150.2" y="438.1" width="37.1" height="173.39999999999998" fill="#2c5e8a"  rx="0" />
<rect x="1203.72" y="430.7" width="37.1" height="180.8" fill="#2c5e8a"  rx="0" />
<rect x="1257.24" y="416.0" width="37.1" height="195.5" fill="#2c5e8a"  rx="0" />
<rect x="1310.76" y="427.8" width="37.1" height="183.7" fill="#2c5e8a"  rx="0" />
<rect x="1364.28" y="440.2" width="37.1" height="171.3" fill="#2c5e8a"  rx="0" />
<rect x="1417.8" y="420.7" width="37.1" height="190.8" fill="#2c5e8a"  rx="0" />
<rect x="1471.32" y="422.4" width="37.1" height="189.10000000000002" fill="#2c5e8a"  rx="0" />
<rect x="1524.84" y="424.8" width="37.1" height="186.7" fill="#2c5e8a"  rx="0" />
<rect x="1578.36" y="442.6" width="37.1" height="168.89999999999998" fill="#2c5e8a"  rx="0" />
<rect x="1631.88" y="456.8" width="37.1" height="154.7" fill="#2c5e8a"  rx="0" />
<rect x="1685.4" y="592.2" width="37.1" height="19.299999999999955" fill="#2c5e8a"  rx="0" />
<line x1="1141.6" y1="611.5" x2="1730.4" y2="611.5" stroke="#b8b8b8" stroke-width="1.6" />
<polyline points="1168.7,418.3 1222,412 1275.5,390.7 1329,411.5 1382.7,422.4 1436.3,404.7 1489.9,412 1543.3,422.4 1596.7,437.3 1650.4,493.9 1703.7,597.6" fill="none" stroke="#2e75a8" stroke-width="1.4"/>
<circle cx="1168.7" cy="418.3" r="3.6" fill="#2e75a8"  />
<circle cx="1222" cy="412" r="3.6" fill="#2e75a8"  />
<circle cx="1275.5" cy="390.7" r="3.6" fill="#2e75a8"  />
<circle cx="1329" cy="411.5" r="3.6" fill="#2e75a8"  />
<circle cx="1382.7" cy="422.4" r="3.6" fill="#2e75a8"  />
<circle cx="1436.3" cy="404.7" r="3.6" fill="#2e75a8"  />
<circle cx="1489.9" cy="412" r="3.6" fill="#2e75a8"  />
<circle cx="1543.3" cy="422.4" r="3.6" fill="#2e75a8"  />
<circle cx="1596.7" cy="437.3" r="3.6" fill="#2e75a8"  />
<circle cx="1650.4" cy="493.9" r="3.6" fill="#2e75a8"  />
<circle cx="1703.7" cy="597.6" r="3.6" fill="#2e75a8"  />
<circle cx="1650.4" cy="493.9" r="3.6" fill="#3b7fb0" stroke="#5a93bf" stroke-width="1" />
<circle cx="1703.7" cy="597.6" r="3.6" fill="#3b7fb0" stroke="#5a93bf" stroke-width="1" />
<text x="1126" y="390.7" font-family="Liberation Sans" font-size="15.2" fill="#595959" font-weight="400" text-anchor="end" >400 000 000,00</text>
<text x="1126" y="501.3" font-family="Liberation Sans" font-size="15.2" fill="#595959" font-weight="400" text-anchor="end" >200 000 000,00</text>
<text x="1126" y="616.8" font-family="Liberation Sans" font-size="15.2" fill="#595959" font-weight="400" text-anchor="end" >0,00</text>
<text x="1747.6" y="390.7" font-family="Liberation Sans" font-size="15.2" fill="#595959" font-weight="400" text-anchor="start" >100 000 000,00</text>
<text x="1747.6" y="501.3" font-family="Liberation Sans" font-size="15.2" fill="#595959" font-weight="400" text-anchor="start" >50 000 000,00</text>
<text x="1747.6" y="616.8" font-family="Liberation Sans" font-size="15.2" fill="#595959" font-weight="400" text-anchor="start" >0,00</text>
<text transform="translate(1176.0,625.5) rotate(-45)" font-family="Liberation Sans" font-size="16" fill="#595959" text-anchor="end">2019-К1</text>
<text transform="translate(1229.5,625.5) rotate(-45)" font-family="Liberation Sans" font-size="16" fill="#595959" text-anchor="end">2019-К2</text>
<text transform="translate(1283.0,625.5) rotate(-45)" font-family="Liberation Sans" font-size="16" fill="#595959" text-anchor="end">2019-К3</text>
<text transform="translate(1336.6,625.5) rotate(-45)" font-family="Liberation Sans" font-size="16" fill="#595959" text-anchor="end">2019-К4</text>
<text transform="translate(1390.1,625.5) rotate(-45)" font-family="Liberation Sans" font-size="16" fill="#595959" text-anchor="end">2020-К1</text>
<text transform="translate(1443.6,625.5) rotate(-45)" font-family="Liberation Sans" font-size="16" fill="#595959" text-anchor="end">2020-К2</text>
<text transform="translate(1497.1,625.5) rotate(-45)" font-family="Liberation Sans" font-size="16" fill="#595959" text-anchor="end">2020-К3</text>
<text transform="translate(1550.6,625.5) rotate(-45)" font-family="Liberation Sans" font-size="16" fill="#595959" text-anchor="end">2020-К4</text>
<text transform="translate(1604.2,625.5) rotate(-45)" font-family="Liberation Sans" font-size="16" fill="#595959" text-anchor="end">2021-К1</text>
<text transform="translate(1657.7,625.5) rotate(-45)" font-family="Liberation Sans" font-size="16" fill="#595959" text-anchor="end">2021-К2</text>
<text transform="translate(1711.2,625.5) rotate(-45)" font-family="Liberation Sans" font-size="16" fill="#595959" text-anchor="end">2021-К3</text>
<text x="0" y="0" font-family="Liberation Sans" font-size="17.5" fill="#595959" font-weight="400" text-anchor="middle" transform="translate(995.5,512.3) rotate(-90)">Продажи</text>
<path d="M984 451.7 L991 457.1 L984 462.5 Z" stroke="#757575" stroke-width="0" fill="#757575" />
<text x="0" y="0" font-family="Liberation Sans" font-size="17.2" fill="#595959" font-weight="400" text-anchor="middle" transform="translate(1880.5,477.4) rotate(90)">Маржа</text>
<path d="M1889.8 517.3 L1881.5 522.9 L1889.8 528.5 Z" stroke="#757575" stroke-width="0" fill="#757575" />
<rect x="12.5" y="701.5" width="1895" height="365.5" fill="#fff" stroke="#e3e3e3" stroke-width="1" rx="0" />
<line x1="12.5" y1="749.5" x2="1907.5" y2="749.5" stroke="#e3e3e3" stroke-width="1" />
<rect x="18" y="747" width="250" height="2.2" fill="#009845"  rx="0" />
<path d="M29.5 716.6 h18.7 v16.2 h-18.7 Z M29.5 721.4 h18.7 M35.4 721.4 v11.4 M41.9 721.4 v11.4" stroke="#777777" stroke-width="1.1" fill="none" stroke-linejoin="round"/>
<text x="59.4" y="731" font-family="Liberation Sans" font-size="15" fill="#404040" font-weight="700" text-anchor="start" >Показатели</text>
<path d="M279.5 716.6 h19.2 v16.3 h-19.2 Z M285 719.3 v13.6 M290.2 719.3 v13.6 M294.4 719.3 v13.6 M279.5 719.3 h19.2" stroke="#777777" stroke-width="1.1" fill="none" stroke-linejoin="round"/>
<circle cx="282.2" cy="719.6" r="0.9" fill="#777777"  />
<text x="309.8" y="731" font-family="Liberation Sans" font-size="15" fill="#404040" font-weight="700" text-anchor="start" >Показатели свод</text>
<line x1="16" y1="752.5" x2="1903.5" y2="752.5" stroke="#e6e6e6" stroke-width="1" />
<line x1="210.5" y1="752.5" x2="210.5" y2="1066" stroke="#e6e6e6" stroke-width="1" />
<line x1="392.7" y1="752.5" x2="392.7" y2="1066" stroke="#e6e6e6" stroke-width="1" />
<line x1="566.4" y1="752.5" x2="566.4" y2="1066" stroke="#e6e6e6" stroke-width="1" />
<line x1="763.7" y1="752.5" x2="763.7" y2="1066" stroke="#e6e6e6" stroke-width="1" />
<line x1="928.4" y1="752.5" x2="928.4" y2="1066" stroke="#e6e6e6" stroke-width="1" />
<line x1="1083.4" y1="752.5" x2="1083.4" y2="1066" stroke="#e6e6e6" stroke-width="1" />
<line x1="1255.3" y1="752.5" x2="1255.3" y2="1066" stroke="#e6e6e6" stroke-width="1" />
<line x1="1362.6" y1="752.5" x2="1362.6" y2="1066" stroke="#e6e6e6" stroke-width="1" />
<line x1="1485.7" y1="752.5" x2="1485.7" y2="1066" stroke="#e6e6e6" stroke-width="1" />
<line x1="1650.5" y1="752.5" x2="1650.5" y2="1066" stroke="#e6e6e6" stroke-width="1" />
<line x1="1728.5" y1="752.5" x2="1728.5" y2="1066" stroke="#e6e6e6" stroke-width="1" />
<line x1="1863.7" y1="752.5" x2="1863.7" y2="1066" stroke="#e6e6e6" stroke-width="1" />
<line x1="16" y1="810.5" x2="1903.5" y2="810.5" stroke="#c8c8c8" stroke-width="1.2" />
<line x1="16" y1="846" x2="1903.5" y2="846" stroke="#a8a8a8" stroke-width="1.4" />
<text x="23" y="798" font-family="Liberation Sans" font-size="17.3" fill="#595959" font-weight="400" text-anchor="start" >Клиент</text>
<path d="M93 809.5 L99.75 801.4 L106.5 809.5 Z" stroke="#8a8a8a" stroke-width="0" fill="#8a8a8a" />
<circle cx="186.5" cy="780.8" r="5" fill="none" stroke="#404040" stroke-width="1.8" />
<line x1="190.2" y1="784.6" x2="195.5" y2="789.8" stroke="#404040" stroke-width="2" />
<text x="380.2" y="798" font-family="Liberation Sans" font-size="17.3" fill="#595959" font-weight="400" text-anchor="end" >Продажи</text>
<text x="553.9" y="798" font-family="Liberation Sans" font-size="17.3" fill="#595959" font-weight="400" text-anchor="end" >Продажи</text>
<text x="751.2" y="798" font-family="Liberation Sans" font-size="17.3" fill="#595959" font-weight="400" text-anchor="end" >Продажи с НДС</text>
<text x="915.9" y="798" font-family="Liberation Sans" font-size="17.3" fill="#595959" font-weight="400" text-anchor="end" >Маржа</text>
<text x="1070.9" y="798" font-family="Liberation Sans" font-size="17.3" fill="#595959" font-weight="400" text-anchor="end" >Маржа</text>
<text x="1242.8" y="798" font-family="Liberation Sans" font-size="17.3" fill="#595959" font-weight="400" text-anchor="end" >Возвраты</text>
<text x="1350.1" y="798" font-family="Liberation Sans" font-size="17.3" fill="#595959" font-weight="400" text-anchor="end" >% маржи</text>
<text x="1473.2" y="798" font-family="Liberation Sans" font-size="17.3" fill="#595959" font-weight="400" text-anchor="end" >% наценки</text>
<text x="1638.0" y="798" font-family="Liberation Sans" font-size="17.3" fill="#595959" font-weight="400" text-anchor="end" >Себестоимость</text>
<text x="1851.2" y="798" font-family="Liberation Sans" font-size="17.3" fill="#595959" font-weight="400" text-anchor="end" >Скидка</text>
<text x="1716.5" y="777" font-family="Liberation Sans" font-size="16" fill="#595959" font-weight="400" text-anchor="end" >%</text>
<text x="1714" y="798" font-family="Liberation Sans" font-size="17.3" fill="#595959" font-weight="400" text-anchor="end" >себес...</text>
<clipPath id="cl"><rect x="1864" y="752" width="39.5" height="320"/></clipPath>
<text x="1898" y="798" font-family="Liberation Sans" font-size="17" fill="#595959" font-weight="400" text-anchor="start" clip-path="url(#cl)">%</text>
<text x="23" y="833.8" font-family="Liberation Sans" font-size="16.8" fill="#333333" font-weight="700" text-anchor="start" >Итого</text>
<text x="380.7" y="833.8" font-family="Liberation Sans" font-size="18" fill="#333333" font-weight="700" text-anchor="end" >3 107 067 548,84</text>
<text x="554.4" y="833.8" font-family="Liberation Sans" font-size="18" fill="#333333" font-weight="700" text-anchor="end" >3 107 067 548,84</text>
<text x="751.7" y="833.8" font-family="Liberation Sans" font-size="18" fill="#333333" font-weight="700" text-anchor="end" >3 922 349 635,78</text>
<text x="916.4" y="833.8" font-family="Liberation Sans" font-size="18" fill="#333333" font-weight="700" text-anchor="end" >817 923 845,91</text>
<text x="1071.4" y="833.8" font-family="Liberation Sans" font-size="18" fill="#333333" font-weight="700" text-anchor="end" >817 923 845,91</text>
<text x="1243.3" y="833.8" font-family="Liberation Sans" font-size="18" fill="#333333" font-weight="700" text-anchor="end" >161 557 328,42</text>
<text x="1350.6" y="833.8" font-family="Liberation Sans" font-size="16.8" fill="#333333" font-weight="700" text-anchor="end" >26,32%</text>
<text x="1473.7" y="833.8" font-family="Liberation Sans" font-size="16.8" fill="#333333" font-weight="700" text-anchor="end" >35,73%</text>
<text x="1638.5" y="833.8" font-family="Liberation Sans" font-size="18" fill="#333333" font-weight="700" text-anchor="end" >2 289 143 702,93</text>
<text x="1716.5" y="833.8" font-family="Liberation Sans" font-size="16.8" fill="#333333" font-weight="700" text-anchor="end" >73,68%</text>
<text x="1851.7" y="833.8" font-family="Liberation Sans" font-size="18" fill="#333333" font-weight="700" text-anchor="end" >13 230 787,55</text>
<defs><linearGradient id="sh" x1="0" y1="0" x2="0" y2="1"><stop offset="0" stop-color="#000000" stop-opacity="0"/><stop offset="1" stop-color="#000000" stop-opacity="0.085"/></linearGradient><linearGradient id="shr" x1="0" y1="0" x2="1" y2="0"><stop offset="0" stop-color="#000000" stop-opacity="0"/><stop offset="1" stop-color="#000000" stop-opacity="0.11"/></linearGradient></defs>
<rect x="1256" y="846.8" width="106" height="30" fill="#fdc72e"  rx="0" />
<rect x="1363" y="846.8" width="122.2" height="30" fill="#009845"  rx="0" />
<text x="23" y="868.0" font-family="Liberation Sans" font-size="17.3" fill="#404040" font-weight="400" text-anchor="start" >Клиент 1</text>
<text x="381.2" y="868.0" font-family="Liberation Sans" font-size="18" fill="#404040" font-weight="400" text-anchor="end" >85 842 303,68</text>
<text x="752.2" y="868.0" font-family="Liberation Sans" font-size="18" fill="#404040" font-weight="400" text-anchor="end" >107 673 774,38</text>
<text x="916.9" y="868.0" font-family="Liberation Sans" font-size="18" fill="#404040" font-weight="400" text-anchor="end" >23 753 311,18</text>
<text x="1243.8" y="868.0" font-family="Liberation Sans" font-size="18" fill="#404040" font-weight="400" text-anchor="end" >3 885 846,78</text>
<text x="1351.1" y="868.0" font-family="Liberation Sans" font-size="17" fill="#404040" font-weight="400" text-anchor="end" >27,67%</text>
<text x="1474.2" y="868.0" font-family="Liberation Sans" font-size="17" fill="#ffffff" font-weight="400" text-anchor="end" >38,26%</text>
<text x="1639.0" y="868.0" font-family="Liberation Sans" font-size="18" fill="#404040" font-weight="400" text-anchor="end" >62 088 992,50</text>
<text x="1717.0" y="868.0" font-family="Liberation Sans" font-size="17" fill="#404040" font-weight="400" text-anchor="end" >72,33%</text>
<text x="1852.2" y="868.0" font-family="Liberation Sans" font-size="18" fill="#404040" font-weight="400" text-anchor="end" >378 598,19</text>
<line x1="16" y1="877.55" x2="1903.5" y2="877.55" stroke="#ebebeb" stroke-width="1" />
<rect x="1256" y="878.3" width="106" height="30" fill="#fdc72e"  rx="0" />
<rect x="1363" y="878.3" width="122.2" height="30" fill="#009845"  rx="0" />
<text x="23" y="899.5" font-family="Liberation Sans" font-size="17.3" fill="#404040" font-weight="400" text-anchor="start" >Клиент 2</text>
<text x="381.2" y="899.5" font-family="Liberation Sans" font-size="18" fill="#404040" font-weight="400" text-anchor="end" >49 203 594,15</text>
<text x="752.2" y="899.5" font-family="Liberation Sans" font-size="18" fill="#404040" font-weight="400" text-anchor="end" >61 391 255,76</text>
<text x="916.9" y="899.5" font-family="Liberation Sans" font-size="18" fill="#404040" font-weight="400" text-anchor="end" >13 167 257,06</text>
<text x="1243.8" y="899.5" font-family="Liberation Sans" font-size="18" fill="#404040" font-weight="400" text-anchor="end" >1 955 788,42</text>
<text x="1351.1" y="899.5" font-family="Liberation Sans" font-size="17" fill="#404040" font-weight="400" text-anchor="end" >26,76%</text>
<text x="1474.2" y="899.5" font-family="Liberation Sans" font-size="17" fill="#ffffff" font-weight="400" text-anchor="end" >36,54%</text>
<text x="1639.0" y="899.5" font-family="Liberation Sans" font-size="18" fill="#404040" font-weight="400" text-anchor="end" >36 036 337,09</text>
<text x="1717.0" y="899.5" font-family="Liberation Sans" font-size="17" fill="#404040" font-weight="400" text-anchor="end" >73,24%</text>
<text x="1852.2" y="899.5" font-family="Liberation Sans" font-size="18" fill="#404040" font-weight="400" text-anchor="end" >227 130,22</text>
<line x1="16" y1="909.05" x2="1903.5" y2="909.05" stroke="#ebebeb" stroke-width="1" />
<rect x="1256" y="909.8" width="106" height="30" fill="#fdc72e"  rx="0" />
<rect x="1363" y="909.8" width="122.2" height="30" fill="#009845"  rx="0" />
<text x="23" y="931.0" font-family="Liberation Sans" font-size="17.3" fill="#404040" font-weight="400" text-anchor="start" >Клиент 3</text>
<text x="381.2" y="931.0" font-family="Liberation Sans" font-size="18" fill="#404040" font-weight="400" text-anchor="end" >45 091 142,29</text>
<text x="752.2" y="931.0" font-family="Liberation Sans" font-size="18" fill="#404040" font-weight="400" text-anchor="end" >56 833 906,00</text>
<text x="916.9" y="931.0" font-family="Liberation Sans" font-size="18" fill="#404040" font-weight="400" text-anchor="end" >13 185 476,75</text>
<text x="1243.8" y="931.0" font-family="Liberation Sans" font-size="18" fill="#404040" font-weight="400" text-anchor="end" >2 270 448,60</text>
<text x="1351.1" y="931.0" font-family="Liberation Sans" font-size="17" fill="#404040" font-weight="400" text-anchor="end" >29,24%</text>
<text x="1474.2" y="931.0" font-family="Liberation Sans" font-size="17" fill="#ffffff" font-weight="400" text-anchor="end" >41,33%</text>
<text x="1639.0" y="931.0" font-family="Liberation Sans" font-size="18" fill="#404040" font-weight="400" text-anchor="end" >31 905 665,54</text>
<text x="1717.0" y="931.0" font-family="Liberation Sans" font-size="17" fill="#404040" font-weight="400" text-anchor="end" >70,76%</text>
<text x="1852.2" y="931.0" font-family="Liberation Sans" font-size="18" fill="#404040" font-weight="400" text-anchor="end" >214 372,18</text>
<line x1="16" y1="940.55" x2="1903.5" y2="940.55" stroke="#ebebeb" stroke-width="1" />
<rect x="1256" y="941.3" width="106" height="30" fill="#fdc72e"  rx="0" />
<rect x="1363" y="941.3" width="122.2" height="30" fill="#009845"  rx="0" />
<text x="23" y="962.5" font-family="Liberation Sans" font-size="17.3" fill="#404040" font-weight="400" text-anchor="start" >Клиент 4</text>
<text x="381.2" y="962.5" font-family="Liberation Sans" font-size="18" fill="#404040" font-weight="400" text-anchor="end" >37 804 047,10</text>
<text x="752.2" y="962.5" font-family="Liberation Sans" font-size="18" fill="#404040" font-weight="400" text-anchor="end" >46 124 761,86</text>
<text x="916.9" y="962.5" font-family="Liberation Sans" font-size="18" fill="#404040" font-weight="400" text-anchor="end" >11 064 372,65</text>
<text x="1243.8" y="962.5" font-family="Liberation Sans" font-size="18" fill="#404040" font-weight="400" text-anchor="end" >633 257,02</text>
<text x="1351.1" y="962.5" font-family="Liberation Sans" font-size="17" fill="#404040" font-weight="400" text-anchor="end" >29,27%</text>
<text x="1474.2" y="962.5" font-family="Liberation Sans" font-size="17" fill="#ffffff" font-weight="400" text-anchor="end" >41,38%</text>
<text x="1639.0" y="962.5" font-family="Liberation Sans" font-size="18" fill="#404040" font-weight="400" text-anchor="end" >26 739 674,45</text>
<text x="1717.0" y="962.5" font-family="Liberation Sans" font-size="17" fill="#404040" font-weight="400" text-anchor="end" >70,73%</text>
<text x="1852.2" y="962.5" font-family="Liberation Sans" font-size="18" fill="#404040" font-weight="400" text-anchor="end" >125 217,94</text>
<line x1="16" y1="972.05" x2="1903.5" y2="972.05" stroke="#ebebeb" stroke-width="1" />
<rect x="1256" y="972.8" width="106" height="30" fill="#fdc72e"  rx="0" />
<rect x="1363" y="972.8" width="122.2" height="30" fill="#009845"  rx="0" />
<text x="23" y="994.0" font-family="Liberation Sans" font-size="17.3" fill="#404040" font-weight="400" text-anchor="start" >Клиент 5</text>
<text x="381.2" y="994.0" font-family="Liberation Sans" font-size="18" fill="#404040" font-weight="400" text-anchor="end" >45 187 625,36</text>
<text x="752.2" y="994.0" font-family="Liberation Sans" font-size="18" fill="#404040" font-weight="400" text-anchor="end" >58 342 514,07</text>
<text x="916.9" y="994.0" font-family="Liberation Sans" font-size="18" fill="#404040" font-weight="400" text-anchor="end" >11 531 155,92</text>
<text x="1243.8" y="994.0" font-family="Liberation Sans" font-size="18" fill="#404040" font-weight="400" text-anchor="end" >3 431 138,79</text>
<text x="1351.1" y="994.0" font-family="Liberation Sans" font-size="17" fill="#404040" font-weight="400" text-anchor="end" >25,52%</text>
<text x="1474.2" y="994.0" font-family="Liberation Sans" font-size="17" fill="#ffffff" font-weight="400" text-anchor="end" >34,26%</text>
<text x="1639.0" y="994.0" font-family="Liberation Sans" font-size="18" fill="#404040" font-weight="400" text-anchor="end" >33 656 469,44</text>
<text x="1717.0" y="994.0" font-family="Liberation Sans" font-size="17" fill="#404040" font-weight="400" text-anchor="end" >74,48%</text>
<text x="1852.2" y="994.0" font-family="Liberation Sans" font-size="18" fill="#404040" font-weight="400" text-anchor="end" >169 551,81</text>
<line x1="16" y1="1003.55" x2="1903.5" y2="1003.55" stroke="#ebebeb" stroke-width="1" />
<rect x="1256" y="1004.3" width="106" height="30" fill="#fdc72e"  rx="0" />
<rect x="1363" y="1004.3" width="122.2" height="30" fill="#009845"  rx="0" />
<text x="23" y="1025.5" font-family="Liberation Sans" font-size="17.3" fill="#404040" font-weight="400" text-anchor="start" >Клиент 6</text>
<text x="381.2" y="1025.5" font-family="Liberation Sans" font-size="18" fill="#404040" font-weight="400" text-anchor="end" >43 122 921,12</text>
<text x="752.2" y="1025.5" font-family="Liberation Sans" font-size="18" fill="#404040" font-weight="400" text-anchor="end" >53 505 875,02</text>
<text x="916.9" y="1025.5" font-family="Liberation Sans" font-size="18" fill="#404040" font-weight="400" text-anchor="end" >12 692 134,04</text>
<text x="1243.8" y="1025.5" font-family="Liberation Sans" font-size="18" fill="#404040" font-weight="400" text-anchor="end" >1 465 310,25</text>
<text x="1351.1" y="1025.5" font-family="Liberation Sans" font-size="17" fill="#404040" font-weight="400" text-anchor="end" >29,43%</text>
<text x="1474.2" y="1025.5" font-family="Liberation Sans" font-size="17" fill="#ffffff" font-weight="400" text-anchor="end" >41,71%</text>
<text x="1639.0" y="1025.5" font-family="Liberation Sans" font-size="18" fill="#404040" font-weight="400" text-anchor="end" >30 430 787,08</text>
<text x="1717.0" y="1025.5" font-family="Liberation Sans" font-size="17" fill="#404040" font-weight="400" text-anchor="end" >70,57%</text>
<text x="1852.2" y="1025.5" font-family="Liberation Sans" font-size="18" fill="#404040" font-weight="400" text-anchor="end" >127 642,82</text>
<line x1="16" y1="1035.05" x2="1903.5" y2="1035.05" stroke="#ebebeb" stroke-width="1" />
<rect x="1256" y="1035.8" width="106" height="30" fill="#e5001f"  rx="0" />
<rect x="1363" y="1035.8" width="122.2" height="30" fill="#fdc72e"  rx="0" />
<text x="23" y="1057.0" font-family="Liberation Sans" font-size="17.3" fill="#404040" font-weight="400" text-anchor="start" >Клиент 7</text>
<text x="381.2" y="1057.0" font-family="Liberation Sans" font-size="18" fill="#404040" font-weight="400" text-anchor="end" >33 811 191,52</text>
<text x="752.2" y="1057.0" font-family="Liberation Sans" font-size="18" fill="#404040" font-weight="400" text-anchor="end" >43 522 102,05</text>
<text x="916.9" y="1057.0" font-family="Liberation Sans" font-size="18" fill="#404040" font-weight="400" text-anchor="end" >7 697 417,38</text>
<text x="1243.8" y="1057.0" font-family="Liberation Sans" font-size="18" fill="#404040" font-weight="400" text-anchor="end" >2 457 229,17</text>
<text x="1351.1" y="1057.0" font-family="Liberation Sans" font-size="17" fill="#ffffff" font-weight="400" text-anchor="end" >22,77%</text>
<text x="1474.2" y="1057.0" font-family="Liberation Sans" font-size="17" fill="#404040" font-weight="400" text-anchor="end" >29,48%</text>
<text x="1639.0" y="1057.0" font-family="Liberation Sans" font-size="18" fill="#404040" font-weight="400" text-anchor="end" >26 113 774,14</text>
<text x="1717.0" y="1057.0" font-family="Liberation Sans" font-size="17" fill="#404040" font-weight="400" text-anchor="end" >77,23%</text>
<text x="1852.2" y="1057.0" font-family="Liberation Sans" font-size="18" fill="#404040" font-weight="400" text-anchor="end" >145 940,17</text>
<polyline points="409.2,855.8 422.7,861.2 436.2,853.3 449.6,861.7 463.1,861.7 476.6,861.0 490.1,858.1 503.6,857.9 517.0,865.2 530.5,865.4 544.0,870.0" fill="none" stroke="#2c5e8a" stroke-width="1.5"/>
<circle cx="409.2" cy="855.8" r="2.3" fill="#2c5e8a"  />
<circle cx="422.7" cy="861.2" r="2.3" fill="#2c5e8a"  />
<circle cx="436.2" cy="853.3" r="2.3" fill="#2c5e8a"  />
<circle cx="449.6" cy="861.7" r="2.3" fill="#2c5e8a"  />
<circle cx="463.1" cy="861.7" r="2.3" fill="#2c5e8a"  />
<circle cx="476.6" cy="861" r="2.3" fill="#2c5e8a"  />
<circle cx="490.1" cy="858.1" r="2.3" fill="#2c5e8a"  />
<circle cx="503.6" cy="857.9" r="2.3" fill="#2c5e8a"  />
<circle cx="517.0" cy="865.2" r="2.3" fill="#2c5e8a"  />
<circle cx="530.5" cy="865.4" r="2.3" fill="#2c5e8a"  />
<circle cx="544.0" cy="870" r="2.3" fill="#2c5e8a"  />
<polyline points="945.0,857.1 956.6,863.8 968.3,853.3 980.0,862.7 991.6,861.7 1003.2,861.0 1014.9,858.1 1026.5,855.8 1038.2,865.8 1049.8,868.3 1061.5,870.0" fill="none" stroke="#2c5e8a" stroke-width="1.5"/>
<circle cx="945.0" cy="857.1" r="2.3" fill="#2c5e8a"  />
<circle cx="956.6" cy="863.8" r="2.3" fill="#2c5e8a"  />
<circle cx="968.3" cy="853.3" r="2.3" fill="#2c5e8a"  />
<circle cx="980.0" cy="862.7" r="2.3" fill="#2c5e8a"  />
<circle cx="991.6" cy="861.7" r="2.3" fill="#2c5e8a"  />
<circle cx="1003.2" cy="861.0" r="2.3" fill="#2c5e8a"  />
<circle cx="1014.9" cy="858.1" r="2.3" fill="#2c5e8a"  />
<circle cx="1026.5" cy="855.8" r="2.3" fill="#2c5e8a"  />
<circle cx="1038.2" cy="865.8" r="2.3" fill="#2c5e8a"  />
<circle cx="1049.8" cy="868.3" r="2.3" fill="#2c5e8a"  />
<circle cx="1061.5" cy="870.0" r="2.3" fill="#2c5e8a"  />
<polyline points="409.2,891.2 422.7,884.2 436.2,885.6 449.6,895.4 463.1,889.8 476.6,889.2 490.1,895.0 503.6,890.4 517.0,893.8 530.5,896.9 544.0,901.7" fill="none" stroke="#2c5e8a" stroke-width="1.5"/>
<circle cx="409.2" cy="891.2" r="2.3" fill="#2c5e8a"  />
<circle cx="422.7" cy="884.2" r="2.3" fill="#2c5e8a"  />
<circle cx="436.2" cy="885.6" r="2.3" fill="#2c5e8a"  />
<circle cx="449.6" cy="895.4" r="2.3" fill="#2c5e8a"  />
<circle cx="463.1" cy="889.8" r="2.3" fill="#2c5e8a"  />
<circle cx="476.6" cy="889.2" r="2.3" fill="#2c5e8a"  />
<circle cx="490.1" cy="895" r="2.3" fill="#2c5e8a"  />
<circle cx="503.6" cy="890.4" r="2.3" fill="#2c5e8a"  />
<circle cx="517.0" cy="893.8" r="2.3" fill="#2c5e8a"  />
<circle cx="530.5" cy="896.9" r="2.3" fill="#2c5e8a"  />
<circle cx="544.0" cy="901.7" r="2.3" fill="#2c5e8a"  />
<polyline points="945.0,889.8 956.6,884.2 968.3,888.3 980.0,896.7 991.6,890.8 1003.2,890.0 1014.9,894.4 1026.5,890.4 1038.2,892.9 1049.8,901.7 1061.5,900.8" fill="none" stroke="#2c5e8a" stroke-width="1.5"/>
<circle cx="945.0" cy="889.8" r="2.3" fill="#2c5e8a"  />
<circle cx="956.6" cy="884.2" r="2.3" fill="#2c5e8a"  />
<circle cx="968.3" cy="888.3" r="2.3" fill="#2c5e8a"  />
<circle cx="980.0" cy="896.7" r="2.3" fill="#2c5e8a"  />
<circle cx="991.6" cy="890.8" r="2.3" fill="#2c5e8a"  />
<circle cx="1003.2" cy="890.0" r="2.3" fill="#2c5e8a"  />
<circle cx="1014.9" cy="894.4" r="2.3" fill="#2c5e8a"  />
<circle cx="1026.5" cy="890.4" r="2.3" fill="#2c5e8a"  />
<circle cx="1038.2" cy="892.9" r="2.3" fill="#2c5e8a"  />
<circle cx="1049.8" cy="901.7" r="2.3" fill="#2c5e8a"  />
<circle cx="1061.5" cy="900.8" r="2.3" fill="#2c5e8a"  />
<polyline points="409.2,919.4 422.7,920.0 436.2,918.8 449.6,926.2 463.1,923.8 476.6,922.3 490.1,916.2 503.6,925.4 517.0,926.7 530.5,929.6 544.0,932.9" fill="none" stroke="#2c5e8a" stroke-width="1.5"/>
<circle cx="409.2" cy="919.4" r="2.3" fill="#2c5e8a"  />
<circle cx="422.7" cy="920" r="2.3" fill="#2c5e8a"  />
<circle cx="436.2" cy="918.8" r="2.3" fill="#2c5e8a"  />
<circle cx="449.6" cy="926.2" r="2.3" fill="#2c5e8a"  />
<circle cx="463.1" cy="923.8" r="2.3" fill="#2c5e8a"  />
<circle cx="476.6" cy="922.3" r="2.3" fill="#2c5e8a"  />
<circle cx="490.1" cy="916.2" r="2.3" fill="#2c5e8a"  />
<circle cx="503.6" cy="925.4" r="2.3" fill="#2c5e8a"  />
<circle cx="517.0" cy="926.7" r="2.3" fill="#2c5e8a"  />
<circle cx="530.5" cy="929.6" r="2.3" fill="#2c5e8a"  />
<circle cx="544.0" cy="932.9" r="2.3" fill="#2c5e8a"  />
<polyline points="945.0,917.3 956.6,918.5 968.3,917.7 980.0,925.6 991.6,923.8 1003.2,921.2 1014.9,916.2 1026.5,926.7 1038.2,925.0 1049.8,932.9 1061.5,930.8" fill="none" stroke="#2c5e8a" stroke-width="1.5"/>
<circle cx="945.0" cy="917.3" r="2.3" fill="#2c5e8a"  />
<circle cx="956.6" cy="918.5" r="2.3" fill="#2c5e8a"  />
<circle cx="968.3" cy="917.7" r="2.3" fill="#2c5e8a"  />
<circle cx="980.0" cy="925.6" r="2.3" fill="#2c5e8a"  />
<circle cx="991.6" cy="923.8" r="2.3" fill="#2c5e8a"  />
<circle cx="1003.2" cy="921.2" r="2.3" fill="#2c5e8a"  />
<circle cx="1014.9" cy="916.2" r="2.3" fill="#2c5e8a"  />
<circle cx="1026.5" cy="926.7" r="2.3" fill="#2c5e8a"  />
<circle cx="1038.2" cy="925.0" r="2.3" fill="#2c5e8a"  />
<circle cx="1049.8" cy="932.9" r="2.3" fill="#2c5e8a"  />
<circle cx="1061.5" cy="930.8" r="2.3" fill="#2c5e8a"  />
<polyline points="409.2,954.6 422.7,947.1 436.2,947.9 449.6,952.7 463.1,952.5 476.6,952.9 490.1,959.0 503.6,957.9 517.0,957.1 530.5,957.3 544.0,964.8" fill="none" stroke="#2c5e8a" stroke-width="1.5"/>
<circle cx="409.2" cy="954.6" r="2.3" fill="#2c5e8a"  />
<circle cx="422.7" cy="947.1" r="2.3" fill="#2c5e8a"  />
<circle cx="436.2" cy="947.9" r="2.3" fill="#2c5e8a"  />
<circle cx="449.6" cy="952.7" r="2.3" fill="#2c5e8a"  />
<circle cx="463.1" cy="952.5" r="2.3" fill="#2c5e8a"  />
<circle cx="476.6" cy="952.9" r="2.3" fill="#2c5e8a"  />
<circle cx="490.1" cy="959" r="2.3" fill="#2c5e8a"  />
<circle cx="503.6" cy="957.9" r="2.3" fill="#2c5e8a"  />
<circle cx="517.0" cy="957.1" r="2.3" fill="#2c5e8a"  />
<circle cx="530.5" cy="957.3" r="2.3" fill="#2c5e8a"  />
<circle cx="544.0" cy="964.8" r="2.3" fill="#2c5e8a"  />
<polyline points="945.0,954.2 956.6,949.6 968.3,947.5 980.0,952.7 991.6,947.9 1003.2,950.6 1014.9,957.9 1026.5,957.9 1038.2,956.9 1049.8,956.2 1061.5,964.8" fill="none" stroke="#2c5e8a" stroke-width="1.5"/>
<circle cx="945.0" cy="954.2" r="2.3" fill="#2c5e8a"  />
<circle cx="956.6" cy="949.6" r="2.3" fill="#2c5e8a"  />
<circle cx="968.3" cy="947.5" r="2.3" fill="#2c5e8a"  />
<circle cx="980.0" cy="952.7" r="2.3" fill="#2c5e8a"  />
<circle cx="991.6" cy="947.9" r="2.3" fill="#2c5e8a"  />
<circle cx="1003.2" cy="950.6" r="2.3" fill="#2c5e8a"  />
<circle cx="1014.9" cy="957.9" r="2.3" fill="#2c5e8a"  />
<circle cx="1026.5" cy="957.9" r="2.3" fill="#2c5e8a"  />
<circle cx="1038.2" cy="956.9" r="2.3" fill="#2c5e8a"  />
<circle cx="1049.8" cy="956.2" r="2.3" fill="#2c5e8a"  />
<circle cx="1061.5" cy="964.8" r="2.3" fill="#2c5e8a"  />
<polyline points="409.2,985.6 422.7,988.8 436.2,979.0 449.6,994.4 463.1,990.4 476.6,985.4 490.1,993.3 503.6,989.6 517.0,988.8 530.5,988.1 544.0,995.6" fill="none" stroke="#2c5e8a" stroke-width="1.5"/>
<circle cx="409.2" cy="985.6" r="2.3" fill="#2c5e8a"  />
<circle cx="422.7" cy="988.8" r="2.3" fill="#2c5e8a"  />
<circle cx="436.2" cy="979" r="2.3" fill="#2c5e8a"  />
<circle cx="449.6" cy="994.4" r="2.3" fill="#2c5e8a"  />
<circle cx="463.1" cy="990.4" r="2.3" fill="#2c5e8a"  />
<circle cx="476.6" cy="985.4" r="2.3" fill="#2c5e8a"  />
<circle cx="490.1" cy="993.3" r="2.3" fill="#2c5e8a"  />
<circle cx="503.6" cy="989.6" r="2.3" fill="#2c5e8a"  />
<circle cx="517.0" cy="988.8" r="2.3" fill="#2c5e8a"  />
<circle cx="530.5" cy="988.1" r="2.3" fill="#2c5e8a"  />
<circle cx="544.0" cy="995.6" r="2.3" fill="#2c5e8a"  />
<polyline points="945.0,984.6 956.6,987.7 968.3,979.0 980.0,995.8 991.6,987.9 1003.2,982.7 1014.9,989.6 1026.5,987.5 1038.2,988.5 1049.8,990.2 1061.5,992.1" fill="none" stroke="#2c5e8a" stroke-width="1.5"/>
<circle cx="945.0" cy="984.6" r="2.3" fill="#2c5e8a"  />
<circle cx="956.6" cy="987.7" r="2.3" fill="#2c5e8a"  />
<circle cx="968.3" cy="979.0" r="2.3" fill="#2c5e8a"  />
<circle cx="980.0" cy="995.8" r="2.3" fill="#2c5e8a"  />
<circle cx="991.6" cy="987.9" r="2.3" fill="#2c5e8a"  />
<circle cx="1003.2" cy="982.7" r="2.3" fill="#2c5e8a"  />
<circle cx="1014.9" cy="989.6" r="2.3" fill="#2c5e8a"  />
<circle cx="1026.5" cy="987.5" r="2.3" fill="#2c5e8a"  />
<circle cx="1038.2" cy="988.5" r="2.3" fill="#2c5e8a"  />
<circle cx="1049.8" cy="990.2" r="2.3" fill="#2c5e8a"  />
<circle cx="1061.5" cy="992.1" r="2.3" fill="#2c5e8a"  />
<polyline points="409.2,1010.4 422.7,1019.2 436.2,1023.8 449.6,1023.8 463.1,1024.6 476.6,1024.4 490.1,1023.3 503.6,1023.5 517.0,1022.3 530.5,1024.8 544.0,1027.7" fill="none" stroke="#2c5e8a" stroke-width="1.5"/>
<circle cx="409.2" cy="1010.4" r="2.3" fill="#2c5e8a"  />
<circle cx="422.7" cy="1019.2" r="2.3" fill="#2c5e8a"  />
<circle cx="436.2" cy="1023.8" r="2.3" fill="#2c5e8a"  />
<circle cx="449.6" cy="1023.8" r="2.3" fill="#2c5e8a"  />
<circle cx="463.1" cy="1024.6" r="2.3" fill="#2c5e8a"  />
<circle cx="476.6" cy="1024.4" r="2.3" fill="#2c5e8a"  />
<circle cx="490.1" cy="1023.3" r="2.3" fill="#2c5e8a"  />
<circle cx="503.6" cy="1023.5" r="2.3" fill="#2c5e8a"  />
<circle cx="517.0" cy="1022.3" r="2.3" fill="#2c5e8a"  />
<circle cx="530.5" cy="1024.8" r="2.3" fill="#2c5e8a"  />
<circle cx="544.0" cy="1027.7" r="2.3" fill="#2c5e8a"  />
<polyline points="945.0,1010.4 956.6,1017.1 968.3,1023.8 980.0,1023.3 991.6,1023.8 1003.2,1024.8 1014.9,1024.2 1026.5,1023.3 1038.2,1021.0 1049.8,1025.6 1061.5,1027.7" fill="none" stroke="#2c5e8a" stroke-width="1.5"/>
<circle cx="945.0" cy="1010.4" r="2.3" fill="#2c5e8a"  />
<circle cx="956.6" cy="1017.1" r="2.3" fill="#2c5e8a"  />
<circle cx="968.3" cy="1023.8" r="2.3" fill="#2c5e8a"  />
<circle cx="980.0" cy="1023.3" r="2.3" fill="#2c5e8a"  />
<circle cx="991.6" cy="1023.8" r="2.3" fill="#2c5e8a"  />
<circle cx="1003.2" cy="1024.8" r="2.3" fill="#2c5e8a"  />
<circle cx="1014.9" cy="1024.2" r="2.3" fill="#2c5e8a"  />
<circle cx="1026.5" cy="1023.3" r="2.3" fill="#2c5e8a"  />
<circle cx="1038.2" cy="1021.0" r="2.3" fill="#2c5e8a"  />
<circle cx="1049.8" cy="1025.6" r="2.3" fill="#2c5e8a"  />
<circle cx="1061.5" cy="1027.7" r="2.3" fill="#2c5e8a"  />
<polyline points="409.2,1051.7 422.7,1049.0 436.2,1042.3 449.6,1052.9 463.1,1055.2 476.6,1051.5 490.1,1052.9 503.6,1053.3 517.0,1050.8 530.5,1051.2 544.0,1059.6" fill="none" stroke="#2c5e8a" stroke-width="1.5"/>
<circle cx="409.2" cy="1051.7" r="2.3" fill="#2c5e8a"  />
<circle cx="422.7" cy="1049" r="2.3" fill="#2c5e8a"  />
<circle cx="436.2" cy="1042.3" r="2.3" fill="#2c5e8a"  />
<circle cx="449.6" cy="1052.9" r="2.3" fill="#2c5e8a"  />
<circle cx="463.1" cy="1055.2" r="2.3" fill="#2c5e8a"  />
<circle cx="476.6" cy="1051.5" r="2.3" fill="#2c5e8a"  />
<circle cx="490.1" cy="1052.9" r="2.3" fill="#2c5e8a"  />
<circle cx="503.6" cy="1053.3" r="2.3" fill="#2c5e8a"  />
<circle cx="517.0" cy="1050.8" r="2.3" fill="#2c5e8a"  />
<circle cx="530.5" cy="1051.2" r="2.3" fill="#2c5e8a"  />
<circle cx="544.0" cy="1059.6" r="2.3" fill="#2c5e8a"  />
<polyline points="945.0,1052.3 956.6,1050.6 968.3,1042.3 980.0,1057.5 991.6,1057.5 1003.2,1053.3 1014.9,1053.3 1026.5,1059.6 1038.2,1050.6 1049.8,1055.2 1061.5,1059.6" fill="none" stroke="#2c5e8a" stroke-width="1.5"/>
<circle cx="945.0" cy="1052.3" r="2.3" fill="#2c5e8a"  />
<circle cx="956.6" cy="1050.6" r="2.3" fill="#2c5e8a"  />
<circle cx="968.3" cy="1042.3" r="2.3" fill="#2c5e8a"  />
<circle cx="980.0" cy="1057.5" r="2.3" fill="#2c5e8a"  />
<circle cx="991.6" cy="1057.5" r="2.3" fill="#2c5e8a"  />
<circle cx="1003.2" cy="1053.3" r="2.3" fill="#2c5e8a"  />
<circle cx="1014.9" cy="1053.3" r="2.3" fill="#2c5e8a"  />
<circle cx="1026.5" cy="1059.6" r="2.3" fill="#2c5e8a"  />
<circle cx="1038.2" cy="1050.6" r="2.3" fill="#2c5e8a"  />
<circle cx="1049.8" cy="1055.2" r="2.3" fill="#2c5e8a"  />
<circle cx="1061.5" cy="1059.6" r="2.3" fill="#2c5e8a"  />
<rect x="210.5" y="1036" width="1693" height="30" fill="url(#sh)"  rx="0" />
<rect x="1884" y="846.5" width="19.5" height="219.5" fill="url(#shr)"  rx="0" />
</svg></body></html>
